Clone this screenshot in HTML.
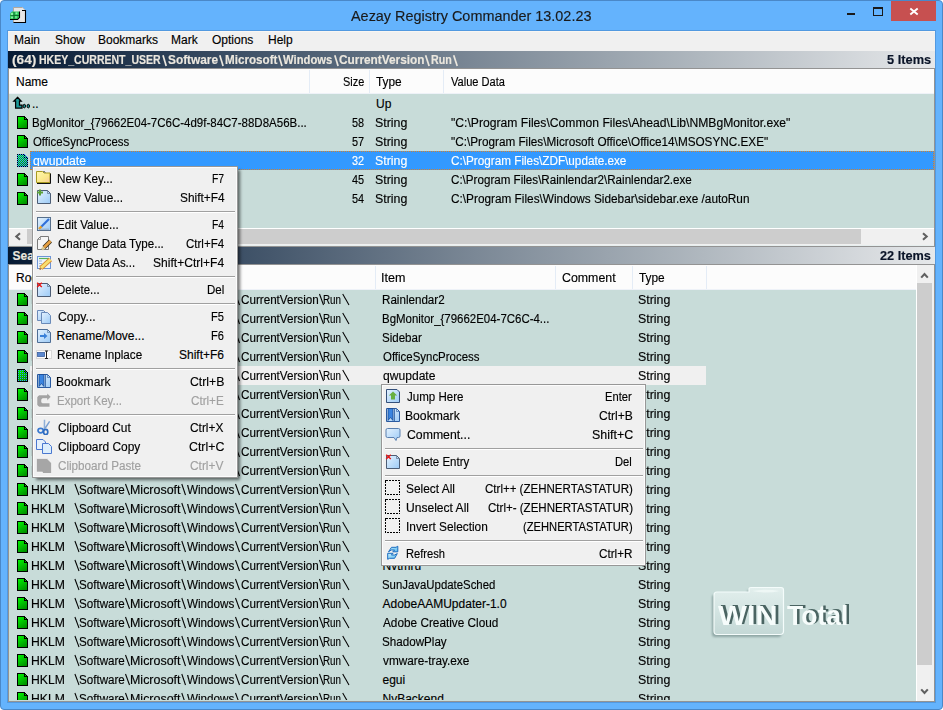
<!DOCTYPE html><html><head><meta charset="utf-8"><style>
html,body{margin:0;padding:0;width:943px;height:710px;overflow:hidden;background:#ffffff;font-family:'Liberation Sans', sans-serif;}
div{-webkit-text-stroke:0.15px currentColor;}
</style></head><body>
<div style="position:absolute;left:0;top:0;width:941px;height:708px;background:#64b3fd;border:1px solid #4a88c8;border-radius:4px"></div>
<svg style="position:absolute;left:8px;top:5px" width="20" height="20" viewBox="8 5 20 20">
<path d="M13.5 7.5 H22.5 L25.5 10.5 V22.5 H13.5 Z" fill="#e6e6e6"/>
<path d="M13.5 22.5 V7.5 H22.5" fill="none" stroke="#b0a8a0" stroke-width="1"/>
<path d="M22.5 7.5 L25.5 10.5" fill="none" stroke="#c0c0c0" stroke-width="1"/>
<path d="M22 10.5 H25.5 V22.5 H13.5" fill="none" stroke="#000" stroke-width="1.1"/>
<path d="M10 13.6 L12 11.6 H19.5 V17.6 L17.6 19.5 H10 Z" fill="#2fc85a"/>
<path d="M10 19.5 H17.6 L19.5 17.6 V11.6" fill="none" stroke="#000" stroke-width="1.1"/>
<path d="M14 12 V19 M10.5 15.5 H19" stroke="#0a6a2a" stroke-width="0.9"/>
<circle cx="12" cy="14" r="1.2" fill="#8af0a8"/><circle cx="16.5" cy="13.2" r="1" fill="#8af0a8"/><circle cx="12" cy="17.5" r="1" fill="#8af0a8"/><circle cx="16" cy="17" r="1" fill="#7ae098"/>
</svg>
<div style="position:absolute;top:8px;font-size:15.5px;line-height:15.5px;color:#1a1a1a;white-space:pre;left:351.00px;transform-origin:0 0;transform:scaleX(0.9302);">Aezay Registry Commander 13.02.23</div>
<div style="position:absolute;left:891px;top:1px;width:45px;height:20px;background:#c75050"></div>
<svg style="position:absolute;left:909px;top:7px" width="10" height="9" viewBox="0 0 10 9">
<path d="M1.3 1.6 L8.7 7.6 M8.7 1.6 L1.3 7.6" stroke="#fff" stroke-width="1.9"/></svg>
<div style="position:absolute;left:847px;top:13px;width:8px;height:2px;background:#1a1a1a"></div>
<div style="position:absolute;left:873px;top:7px;width:8px;height:6px;border:1px solid #1a1a1a;border-top-width:2px"></div>
<div style="position:absolute;left:7px;top:30px;width:927px;height:671px;border:1px solid #5299e0"></div>
<div style="position:absolute;left:8px;top:31px;width:927px;height:20px;background:#f0f0f0"></div>
<div style="position:absolute;left:8px;top:31px;width:927px;height:1px;background:#f9f6f2"></div>
<div style="position:absolute;top:34px;font-size:12px;line-height:12px;color:#000000;white-space:pre;left:14px;">Main</div>
<div style="position:absolute;top:34px;font-size:12px;line-height:12px;color:#000000;white-space:pre;left:55px;">Show</div>
<div style="position:absolute;top:34px;font-size:12px;line-height:12px;color:#000000;white-space:pre;left:98px;">Bookmarks</div>
<div style="position:absolute;top:34px;font-size:12px;line-height:12px;color:#000000;white-space:pre;left:171px;">Mark</div>
<div style="position:absolute;top:34px;font-size:12px;line-height:12px;color:#000000;white-space:pre;left:212px;">Options</div>
<div style="position:absolute;top:34px;font-size:12px;line-height:12px;color:#000000;white-space:pre;left:268px;">Help</div>
<div style="position:absolute;left:8px;top:51px;width:927px;height:17px;background:linear-gradient(to right,#061a33 0%,#3d5066 25%,#7a8795 50%,#b0b8bf 75%,#e6e8ea 100%)"></div>
<div style="position:absolute;top:54px;font-size:12px;line-height:12px;color:#ebe7de;white-space:pre;font-weight:bold;left:12.20px;transform-origin:0 0;transform:scaleX(1.1381);">(64)</div>
<div style="position:absolute;top:54px;font-size:12px;line-height:12px;color:#ebe7de;white-space:pre;font-weight:bold;left:39.30px;transform-origin:0 0;transform:scaleX(0.8770);">HKEY_CURRENT_USER</div>
<svg style="position:absolute;left:0;top:0;overflow:visible" width="1" height="1"><path d="M163.0 55.2 L166.2 66" stroke="#ebe7de" stroke-width="1.7"/></svg>
<div style="position:absolute;top:54px;font-size:12px;line-height:12px;color:#ebe7de;white-space:pre;font-weight:bold;left:167.50px;transform-origin:0 0;transform:scaleX(0.9882);">Software</div>
<svg style="position:absolute;left:0;top:0;overflow:visible" width="1" height="1"><path d="M219.8 55.2 L223.1 66" stroke="#ebe7de" stroke-width="1.7"/></svg>
<div style="position:absolute;top:54px;font-size:12px;line-height:12px;color:#ebe7de;white-space:pre;font-weight:bold;left:224.90px;transform-origin:0 0;transform:scaleX(0.9704);">Microsoft</div>
<svg style="position:absolute;left:0;top:0;overflow:visible" width="1" height="1"><path d="M278.7 55.2 L282.0 66" stroke="#ebe7de" stroke-width="1.7"/></svg>
<div style="position:absolute;top:54px;font-size:12px;line-height:12px;color:#ebe7de;white-space:pre;font-weight:bold;left:283.20px;transform-origin:0 0;transform:scaleX(0.9377);">Windows</div>
<svg style="position:absolute;left:0;top:0;overflow:visible" width="1" height="1"><path d="M334.8 55.2 L338.09999999999997 66" stroke="#ebe7de" stroke-width="1.7"/></svg>
<div style="position:absolute;top:54px;font-size:12px;line-height:12px;color:#ebe7de;white-space:pre;font-weight:bold;left:339.30px;transform-origin:0 0;transform:scaleX(0.9860);">CurrentVersion</div>
<svg style="position:absolute;left:0;top:0;overflow:visible" width="1" height="1"><path d="M425.6 55.2 L429.09999999999997 66" stroke="#ebe7de" stroke-width="1.7"/></svg>
<div style="position:absolute;top:54px;font-size:12px;line-height:12px;color:#ebe7de;white-space:pre;font-weight:bold;left:430.90px;transform-origin:0 0;transform:scaleX(0.8913);">Run</div>
<svg style="position:absolute;left:0;top:0;overflow:visible" width="1" height="1"><path d="M453.7 55.2 L457.2 66" stroke="#ebe7de" stroke-width="1.7"/></svg>
<div style="position:absolute;top:54px;font-size:12px;line-height:12px;color:#0a1428;white-space:pre;font-weight:bold;left:887.20px;transform-origin:0 0;transform:scaleX(1.0683);">5 Items</div>
<div style="position:absolute;left:8px;top:68px;width:927px;height:179px;background:#939393"></div>
<div style="position:absolute;left:9px;top:69px;width:925px;height:25px;background:#fcfcfc"></div>
<div style="position:absolute;left:9px;top:93px;width:925px;height:1px;background:#eef2f8"></div>
<div style="position:absolute;left:309px;top:70px;width:1px;height:23px;background:#e4ecf6"></div>
<div style="position:absolute;left:369px;top:70px;width:1px;height:23px;background:#e4ecf6"></div>
<div style="position:absolute;left:443px;top:70px;width:1px;height:23px;background:#e4ecf6"></div>
<div style="position:absolute;top:76px;font-size:12px;line-height:12px;color:#000000;white-space:pre;left:16px;">Name</div>
<div style="position:absolute;top:76px;font-size:12px;line-height:12px;color:#000000;white-space:pre;left:343.09px;transform-origin:0 0;transform:scaleX(0.9091);">Size</div>
<div style="position:absolute;top:76px;font-size:12px;line-height:12px;color:#000000;white-space:pre;left:376.00px;transform-origin:0 0;transform:scaleX(0.9885);">Type</div>
<div style="position:absolute;top:76px;font-size:12px;line-height:12px;color:#000000;white-space:pre;left:451.00px;transform-origin:0 0;transform:scaleX(0.9220);">Value Data</div>
<div style="position:absolute;left:9px;top:94px;width:925px;height:134px;background:#c8dcd9"></div>
<svg style="position:absolute;left:0;top:0" width="40" height="115" viewBox="0 0 40 115">
<path d="M17.5 97.3 L21.2 101.2 H19.5 V105.2 H22 V108 H15.6 V101.2 H13.8 Z" fill="#1a9a96" stroke="#000" stroke-width="1.25" stroke-linejoin="miter"/>
<ellipse cx="24.3" cy="106.1" rx="1.25" ry="1.8" fill="#1a9a96" stroke="#000" stroke-width="1"/>
<ellipse cx="28.3" cy="106.1" rx="1.25" ry="1.8" fill="#1a9a96" stroke="#000" stroke-width="1"/></svg>
<div style="position:absolute;top:98px;font-size:12px;line-height:12px;color:#000000;white-space:pre;left:32px;">..</div>
<div style="position:absolute;top:98px;font-size:12px;line-height:12px;color:#000000;white-space:pre;left:376px;">Up</div>
<svg style="position:absolute;left:17px;top:116px" width="11" height="13" viewBox="0 0 11 13" shape-rendering="crispEdges">
<defs><linearGradient id="gg" gradientUnits="userSpaceOnUse" x1="1" y1="1" x2="9" y2="12"><stop offset="0" stop-color="#00f400"/><stop offset="1" stop-color="#008c00"/></linearGradient></defs>
<path d="M0 0 H8 V1 H9 V2 H10 V3 H11 V13 H0 Z" fill="#000"/>
<path d="M1 1 H7 V4 H10 V12 H1 Z" fill="url(#gg)"/><rect x="8" y="2" width="1" height="1" fill="#00d800"/></svg>
<div style="position:absolute;top:117px;font-size:12px;line-height:12px;color:#000000;white-space:pre;left:31.54px;transform-origin:0 0;transform:scaleX(0.9579);">BgMonitor_{79662E04-7C6C-4d9f-84C7-88D8A56B...</div>
<div style="position:absolute;top:117px;font-size:12px;line-height:12px;color:#000000;white-space:pre;left:352.20px;transform-origin:0 0;transform:scaleX(0.9077);">58</div>
<div style="position:absolute;top:117px;font-size:12px;line-height:12px;color:#000000;white-space:pre;left:375.47px;transform-origin:0 0;transform:scaleX(1.0333);">String</div>
<div style="position:absolute;top:117px;font-size:12px;line-height:12px;color:#000000;white-space:pre;left:451.00px;transform-origin:0 0;transform:scaleX(1.0119);">&quot;C:\Program Files\Common Files\Ahead\Lib\NMBgMonitor.exe&quot;</div>
<svg style="position:absolute;left:17px;top:135px" width="11" height="13" viewBox="0 0 11 13" shape-rendering="crispEdges">
<defs><linearGradient id="gg" gradientUnits="userSpaceOnUse" x1="1" y1="1" x2="9" y2="12"><stop offset="0" stop-color="#00f400"/><stop offset="1" stop-color="#008c00"/></linearGradient></defs>
<path d="M0 0 H8 V1 H9 V2 H10 V3 H11 V13 H0 Z" fill="#000"/>
<path d="M1 1 H7 V4 H10 V12 H1 Z" fill="url(#gg)"/><rect x="8" y="2" width="1" height="1" fill="#00d800"/></svg>
<div style="position:absolute;top:136px;font-size:12px;line-height:12px;color:#000000;white-space:pre;left:32.50px;transform-origin:0 0;transform:scaleX(0.9505);">OfficeSyncProcess</div>
<div style="position:absolute;top:136px;font-size:12px;line-height:12px;color:#000000;white-space:pre;left:352.20px;transform-origin:0 0;transform:scaleX(0.9077);">57</div>
<div style="position:absolute;top:136px;font-size:12px;line-height:12px;color:#000000;white-space:pre;left:375.47px;transform-origin:0 0;transform:scaleX(1.0333);">String</div>
<div style="position:absolute;top:136px;font-size:12px;line-height:12px;color:#000000;white-space:pre;left:451.00px;transform-origin:0 0;transform:scaleX(0.9784);">&quot;C:\Program Files\Microsoft Office\Office14\MSOSYNC.EXE&quot;</div>
<div style="position:absolute;left:30px;top:151px;width:904px;height:19px;background:#3399ff"></div>
<div style="position:absolute;left:30px;top:151px;width:902px;height:17px;border:1px dotted #d08030"></div>
<svg style="position:absolute;left:17px;top:154px" width="11" height="13" viewBox="0 0 11 13" shape-rendering="crispEdges">
<defs><linearGradient id="gg" gradientUnits="userSpaceOnUse" x1="1" y1="1" x2="9" y2="12"><stop offset="0" stop-color="#00f400"/><stop offset="1" stop-color="#008c00"/></linearGradient></defs>
<path d="M0 0 H8 V1 H9 V2 H10 V3 H11 V13 H0 Z" fill="#000"/>
<path d="M1 1 H7 V4 H10 V12 H1 Z" fill="url(#gg)"/><rect x="8" y="2" width="1" height="1" fill="#00d800"/><defs><pattern id="chk17_154" width="2" height="2" patternUnits="userSpaceOnUse"><rect x="1" y="0" width="1" height="1" fill="#3399ff"/><rect x="0" y="1" width="1" height="1" fill="#3399ff"/></pattern></defs>
<path d="M0 0 H8 V1 H9 V2 H10 V3 H11 V13 H0 Z" fill="url(#chk17_154)"/></svg>
<div style="position:absolute;top:155px;font-size:12px;line-height:12px;color:#ffffff;white-space:pre;left:32.50px;transform-origin:0 0;transform:scaleX(1.0192);">qwupdate</div>
<div style="position:absolute;top:155px;font-size:12px;line-height:12px;color:#ffffff;white-space:pre;left:352.20px;transform-origin:0 0;transform:scaleX(0.9077);">32</div>
<div style="position:absolute;top:155px;font-size:12px;line-height:12px;color:#ffffff;white-space:pre;left:375.47px;transform-origin:0 0;transform:scaleX(1.0333);">String</div>
<div style="position:absolute;top:155px;font-size:12px;line-height:12px;color:#ffffff;white-space:pre;left:451.00px;transform-origin:0 0;transform:scaleX(0.9777);">C:\Program Files\ZDF\update.exe</div>
<svg style="position:absolute;left:17px;top:173px" width="11" height="13" viewBox="0 0 11 13" shape-rendering="crispEdges">
<defs><linearGradient id="gg" gradientUnits="userSpaceOnUse" x1="1" y1="1" x2="9" y2="12"><stop offset="0" stop-color="#00f400"/><stop offset="1" stop-color="#008c00"/></linearGradient></defs>
<path d="M0 0 H8 V1 H9 V2 H10 V3 H11 V13 H0 Z" fill="#000"/>
<path d="M1 1 H7 V4 H10 V12 H1 Z" fill="url(#gg)"/><rect x="8" y="2" width="1" height="1" fill="#00d800"/></svg>
<div style="position:absolute;top:174px;font-size:12px;line-height:12px;color:#000000;white-space:pre;left:32.5px;">Rainlendar2</div>
<div style="position:absolute;top:174px;font-size:12px;line-height:12px;color:#000000;white-space:pre;left:352.20px;transform-origin:0 0;transform:scaleX(0.9077);">45</div>
<div style="position:absolute;top:174px;font-size:12px;line-height:12px;color:#000000;white-space:pre;left:375.47px;transform-origin:0 0;transform:scaleX(1.0333);">String</div>
<div style="position:absolute;top:174px;font-size:12px;line-height:12px;color:#000000;white-space:pre;left:451.00px;transform-origin:0 0;transform:scaleX(0.9679);">C:\Program Files\Rainlendar2\Rainlendar2.exe</div>
<svg style="position:absolute;left:17px;top:192px" width="11" height="13" viewBox="0 0 11 13" shape-rendering="crispEdges">
<defs><linearGradient id="gg" gradientUnits="userSpaceOnUse" x1="1" y1="1" x2="9" y2="12"><stop offset="0" stop-color="#00f400"/><stop offset="1" stop-color="#008c00"/></linearGradient></defs>
<path d="M0 0 H8 V1 H9 V2 H10 V3 H11 V13 H0 Z" fill="#000"/>
<path d="M1 1 H7 V4 H10 V12 H1 Z" fill="url(#gg)"/><rect x="8" y="2" width="1" height="1" fill="#00d800"/></svg>
<div style="position:absolute;top:193px;font-size:12px;line-height:12px;color:#000000;white-space:pre;left:32.5px;">Sidebar</div>
<div style="position:absolute;top:193px;font-size:12px;line-height:12px;color:#000000;white-space:pre;left:352.20px;transform-origin:0 0;transform:scaleX(0.9077);">54</div>
<div style="position:absolute;top:193px;font-size:12px;line-height:12px;color:#000000;white-space:pre;left:375.47px;transform-origin:0 0;transform:scaleX(1.0333);">String</div>
<div style="position:absolute;top:193px;font-size:12px;line-height:12px;color:#000000;white-space:pre;left:451.00px;transform-origin:0 0;transform:scaleX(0.9835);">C:\Program Files\Windows Sidebar\sidebar.exe /autoRun</div>
<div style="position:absolute;left:9px;top:228px;width:925px;height:1px;background:#ffffff"></div>
<div style="position:absolute;left:9px;top:229px;width:925px;height:17px;background:#f0f0f0"></div>
<div style="position:absolute;left:9px;top:245px;width:925px;height:1px;background:#e6eeee"></div>
<div style="position:absolute;left:27px;top:229px;width:834px;height:15px;background:#cdcdcd"></div>
<div style="position:absolute;left:8px;top:247px;width:927px;height:17px;background:linear-gradient(to right,#061a33 0%,#3d5066 25%,#7a8795 50%,#b0b8bf 75%,#e6e8ea 100%)"></div>
<div style="position:absolute;top:250px;font-size:12px;line-height:12px;color:#ebe7de;white-space:pre;font-weight:bold;left:12.5px;">Search Results</div>
<div style="position:absolute;top:250px;font-size:12px;line-height:12px;color:#0a1428;white-space:pre;font-weight:bold;left:880.20px;transform-origin:0 0;transform:scaleX(1.0583);">22 Items</div>
<div style="position:absolute;left:8px;top:264px;width:927px;height:438px;background:#939393"></div>
<div style="position:absolute;left:9px;top:265px;width:925px;height:436px;background:#c8dcd9"></div>
<div style="position:absolute;left:9px;top:265px;width:907px;height:25px;background:#fcfcfc"></div>
<div style="position:absolute;left:9px;top:289px;width:907px;height:1px;background:#eef2f8"></div>
<div style="position:absolute;left:66px;top:266px;width:1px;height:23px;background:#e4ecf6"></div>
<div style="position:absolute;left:375px;top:266px;width:1px;height:23px;background:#e4ecf6"></div>
<div style="position:absolute;left:555px;top:266px;width:1px;height:23px;background:#e4ecf6"></div>
<div style="position:absolute;left:632px;top:266px;width:1px;height:23px;background:#e4ecf6"></div>
<div style="position:absolute;left:706px;top:266px;width:1px;height:23px;background:#e4ecf6"></div>
<div style="position:absolute;top:272px;font-size:12px;line-height:12px;color:#000000;white-space:pre;left:16px;">Root</div>
<div style="position:absolute;top:272px;font-size:12px;line-height:12px;color:#000000;white-space:pre;left:73px;">Path</div>
<div style="position:absolute;top:272px;font-size:12px;line-height:12px;color:#000000;white-space:pre;left:380.95px;transform-origin:0 0;transform:scaleX(1.0455);">Item</div>
<div style="position:absolute;top:272px;font-size:12px;line-height:12px;color:#000000;white-space:pre;left:562.00px;transform-origin:0 0;transform:scaleX(1.0308);">Comment</div>
<div style="position:absolute;top:272px;font-size:12px;line-height:12px;color:#000000;white-space:pre;left:639.00px;transform-origin:0 0;transform:scaleX(0.9885);">Type</div>
<div style="position:absolute;left:9px;top:289px;width:907px;height:411px;overflow:hidden">
<svg style="position:absolute;left:8px;top:4px" width="11" height="13" viewBox="0 0 11 13" shape-rendering="crispEdges">
<defs><linearGradient id="gg" gradientUnits="userSpaceOnUse" x1="1" y1="1" x2="9" y2="12"><stop offset="0" stop-color="#00f400"/><stop offset="1" stop-color="#008c00"/></linearGradient></defs>
<path d="M0 0 H8 V1 H9 V2 H10 V3 H11 V13 H0 Z" fill="#000"/>
<path d="M1 1 H7 V4 H10 V12 H1 Z" fill="url(#gg)"/><rect x="8" y="2" width="1" height="1" fill="#00d800"/></svg>
<div style="position:absolute;top:5px;font-size:12px;line-height:12px;color:#000000;white-space:pre;left:22.08px;transform-origin:0 0;transform:scaleX(1.0156);">HKLM</div>
<div style="position:absolute;top:5px;font-size:12px;line-height:12px;color:#000000;white-space:pre;left:70.03px;transform-origin:0 0;transform:scaleX(0.9674);">Software</div>
<div style="position:absolute;top:5px;font-size:12px;line-height:12px;color:#000000;white-space:pre;left:120.96px;transform-origin:0 0;transform:scaleX(1.0375);">Microsoft</div>
<div style="position:absolute;top:5px;font-size:12px;line-height:12px;color:#000000;white-space:pre;left:177.70px;transform-origin:0 0;transform:scaleX(0.9735);">Windows</div>
<div style="position:absolute;top:5px;font-size:12px;line-height:12px;color:#000000;white-space:pre;left:231.70px;transform-origin:0 0;transform:scaleX(0.9712);">CurrentVersion</div>
<div style="position:absolute;top:5px;font-size:12px;line-height:12px;color:#000000;white-space:pre;left:314.28px;transform-origin:0 0;transform:scaleX(0.8190);">Run</div>
<svg style="position:absolute;left:0;top:0;overflow:visible" width="1" height="1"><path d="M65.9 5 L70.0 16" stroke="#000" stroke-width="1.05"/><path d="M116.5 5 L120.5 16" stroke="#000" stroke-width="1.05"/><path d="M172.8 5 L176.5 16" stroke="#000" stroke-width="1.05"/><path d="M226.5 5 L230.5 16" stroke="#000" stroke-width="1.05"/><path d="M310.5 5 L314.5 16" stroke="#000" stroke-width="1.05"/><path d="M333.7 5 L340.0 16" stroke="#000" stroke-width="1.05"/></svg>
<div style="position:absolute;top:5px;font-size:12px;line-height:12px;color:#000000;white-space:pre;left:372.53px;transform-origin:0 0;transform:scaleX(0.9683);">Rainlendar2</div>
<div style="position:absolute;top:5px;font-size:12px;line-height:12px;color:#000000;white-space:pre;left:628.97px;transform-origin:0 0;transform:scaleX(1.0333);">String</div>
<svg style="position:absolute;left:8px;top:23px" width="11" height="13" viewBox="0 0 11 13" shape-rendering="crispEdges">
<defs><linearGradient id="gg" gradientUnits="userSpaceOnUse" x1="1" y1="1" x2="9" y2="12"><stop offset="0" stop-color="#00f400"/><stop offset="1" stop-color="#008c00"/></linearGradient></defs>
<path d="M0 0 H8 V1 H9 V2 H10 V3 H11 V13 H0 Z" fill="#000"/>
<path d="M1 1 H7 V4 H10 V12 H1 Z" fill="url(#gg)"/><rect x="8" y="2" width="1" height="1" fill="#00d800"/></svg>
<div style="position:absolute;top:24px;font-size:12px;line-height:12px;color:#000000;white-space:pre;left:22.08px;transform-origin:0 0;transform:scaleX(1.0156);">HKLM</div>
<div style="position:absolute;top:24px;font-size:12px;line-height:12px;color:#000000;white-space:pre;left:70.03px;transform-origin:0 0;transform:scaleX(0.9674);">Software</div>
<div style="position:absolute;top:24px;font-size:12px;line-height:12px;color:#000000;white-space:pre;left:120.96px;transform-origin:0 0;transform:scaleX(1.0375);">Microsoft</div>
<div style="position:absolute;top:24px;font-size:12px;line-height:12px;color:#000000;white-space:pre;left:177.70px;transform-origin:0 0;transform:scaleX(0.9735);">Windows</div>
<div style="position:absolute;top:24px;font-size:12px;line-height:12px;color:#000000;white-space:pre;left:231.70px;transform-origin:0 0;transform:scaleX(0.9712);">CurrentVersion</div>
<div style="position:absolute;top:24px;font-size:12px;line-height:12px;color:#000000;white-space:pre;left:314.28px;transform-origin:0 0;transform:scaleX(0.8190);">Run</div>
<svg style="position:absolute;left:0;top:0;overflow:visible" width="1" height="1"><path d="M65.9 24 L70.0 35" stroke="#000" stroke-width="1.05"/><path d="M116.5 24 L120.5 35" stroke="#000" stroke-width="1.05"/><path d="M172.8 24 L176.5 35" stroke="#000" stroke-width="1.05"/><path d="M226.5 24 L230.5 35" stroke="#000" stroke-width="1.05"/><path d="M310.5 24 L314.5 35" stroke="#000" stroke-width="1.05"/><path d="M333.7 24 L340.0 35" stroke="#000" stroke-width="1.05"/></svg>
<div style="position:absolute;top:24px;font-size:12px;line-height:12px;color:#000000;white-space:pre;left:372.55px;transform-origin:0 0;transform:scaleX(0.9540);">BgMonitor_{79662E04-7C6C-4...</div>
<div style="position:absolute;top:24px;font-size:12px;line-height:12px;color:#000000;white-space:pre;left:628.97px;transform-origin:0 0;transform:scaleX(1.0333);">String</div>
<svg style="position:absolute;left:8px;top:42px" width="11" height="13" viewBox="0 0 11 13" shape-rendering="crispEdges">
<defs><linearGradient id="gg" gradientUnits="userSpaceOnUse" x1="1" y1="1" x2="9" y2="12"><stop offset="0" stop-color="#00f400"/><stop offset="1" stop-color="#008c00"/></linearGradient></defs>
<path d="M0 0 H8 V1 H9 V2 H10 V3 H11 V13 H0 Z" fill="#000"/>
<path d="M1 1 H7 V4 H10 V12 H1 Z" fill="url(#gg)"/><rect x="8" y="2" width="1" height="1" fill="#00d800"/></svg>
<div style="position:absolute;top:43px;font-size:12px;line-height:12px;color:#000000;white-space:pre;left:22.08px;transform-origin:0 0;transform:scaleX(1.0156);">HKLM</div>
<div style="position:absolute;top:43px;font-size:12px;line-height:12px;color:#000000;white-space:pre;left:70.03px;transform-origin:0 0;transform:scaleX(0.9674);">Software</div>
<div style="position:absolute;top:43px;font-size:12px;line-height:12px;color:#000000;white-space:pre;left:120.96px;transform-origin:0 0;transform:scaleX(1.0375);">Microsoft</div>
<div style="position:absolute;top:43px;font-size:12px;line-height:12px;color:#000000;white-space:pre;left:177.70px;transform-origin:0 0;transform:scaleX(0.9735);">Windows</div>
<div style="position:absolute;top:43px;font-size:12px;line-height:12px;color:#000000;white-space:pre;left:231.70px;transform-origin:0 0;transform:scaleX(0.9712);">CurrentVersion</div>
<div style="position:absolute;top:43px;font-size:12px;line-height:12px;color:#000000;white-space:pre;left:314.28px;transform-origin:0 0;transform:scaleX(0.8190);">Run</div>
<svg style="position:absolute;left:0;top:0;overflow:visible" width="1" height="1"><path d="M65.9 43 L70.0 54" stroke="#000" stroke-width="1.05"/><path d="M116.5 43 L120.5 54" stroke="#000" stroke-width="1.05"/><path d="M172.8 43 L176.5 54" stroke="#000" stroke-width="1.05"/><path d="M226.5 43 L230.5 54" stroke="#000" stroke-width="1.05"/><path d="M310.5 43 L314.5 54" stroke="#000" stroke-width="1.05"/><path d="M333.7 43 L340.0 54" stroke="#000" stroke-width="1.05"/></svg>
<div style="position:absolute;top:43px;font-size:12px;line-height:12px;color:#000000;white-space:pre;left:372.54px;transform-origin:0 0;transform:scaleX(0.9625);">Sidebar</div>
<div style="position:absolute;top:43px;font-size:12px;line-height:12px;color:#000000;white-space:pre;left:628.97px;transform-origin:0 0;transform:scaleX(1.0333);">String</div>
<svg style="position:absolute;left:8px;top:61px" width="11" height="13" viewBox="0 0 11 13" shape-rendering="crispEdges">
<defs><linearGradient id="gg" gradientUnits="userSpaceOnUse" x1="1" y1="1" x2="9" y2="12"><stop offset="0" stop-color="#00f400"/><stop offset="1" stop-color="#008c00"/></linearGradient></defs>
<path d="M0 0 H8 V1 H9 V2 H10 V3 H11 V13 H0 Z" fill="#000"/>
<path d="M1 1 H7 V4 H10 V12 H1 Z" fill="url(#gg)"/><rect x="8" y="2" width="1" height="1" fill="#00d800"/></svg>
<div style="position:absolute;top:62px;font-size:12px;line-height:12px;color:#000000;white-space:pre;left:22.08px;transform-origin:0 0;transform:scaleX(1.0156);">HKLM</div>
<div style="position:absolute;top:62px;font-size:12px;line-height:12px;color:#000000;white-space:pre;left:70.03px;transform-origin:0 0;transform:scaleX(0.9674);">Software</div>
<div style="position:absolute;top:62px;font-size:12px;line-height:12px;color:#000000;white-space:pre;left:120.96px;transform-origin:0 0;transform:scaleX(1.0375);">Microsoft</div>
<div style="position:absolute;top:62px;font-size:12px;line-height:12px;color:#000000;white-space:pre;left:177.70px;transform-origin:0 0;transform:scaleX(0.9735);">Windows</div>
<div style="position:absolute;top:62px;font-size:12px;line-height:12px;color:#000000;white-space:pre;left:231.70px;transform-origin:0 0;transform:scaleX(0.9712);">CurrentVersion</div>
<div style="position:absolute;top:62px;font-size:12px;line-height:12px;color:#000000;white-space:pre;left:314.28px;transform-origin:0 0;transform:scaleX(0.8190);">Run</div>
<svg style="position:absolute;left:0;top:0;overflow:visible" width="1" height="1"><path d="M65.9 62 L70.0 73" stroke="#000" stroke-width="1.05"/><path d="M116.5 62 L120.5 73" stroke="#000" stroke-width="1.05"/><path d="M172.8 62 L176.5 73" stroke="#000" stroke-width="1.05"/><path d="M226.5 62 L230.5 73" stroke="#000" stroke-width="1.05"/><path d="M310.5 62 L314.5 73" stroke="#000" stroke-width="1.05"/><path d="M333.7 62 L340.0 73" stroke="#000" stroke-width="1.05"/></svg>
<div style="position:absolute;top:62px;font-size:12px;line-height:12px;color:#000000;white-space:pre;left:373.50px;transform-origin:0 0;transform:scaleX(0.9535);">OfficeSyncProcess</div>
<div style="position:absolute;top:62px;font-size:12px;line-height:12px;color:#000000;white-space:pre;left:628.97px;transform-origin:0 0;transform:scaleX(1.0333);">String</div>
<div style="position:absolute;left:21px;top:77px;width:676px;height:19px;background:#f0f0f0"></div>
<svg style="position:absolute;left:8px;top:80px" width="11" height="13" viewBox="0 0 11 13" shape-rendering="crispEdges">
<defs><linearGradient id="gg" gradientUnits="userSpaceOnUse" x1="1" y1="1" x2="9" y2="12"><stop offset="0" stop-color="#00f400"/><stop offset="1" stop-color="#008c00"/></linearGradient></defs>
<path d="M0 0 H8 V1 H9 V2 H10 V3 H11 V13 H0 Z" fill="#000"/>
<path d="M1 1 H7 V4 H10 V12 H1 Z" fill="url(#gg)"/><rect x="8" y="2" width="1" height="1" fill="#00d800"/><defs><pattern id="chk8_80" width="2" height="2" patternUnits="userSpaceOnUse"><rect x="1" y="1" width="1" height="1" fill="#3399ff"/></pattern></defs><path d="M0 0 H8 V1 H9 V2 H10 V3 H11 V13 H0 Z" fill="url(#chk8_80)"/></svg>
<div style="position:absolute;top:81px;font-size:12px;line-height:12px;color:#000000;white-space:pre;left:22.08px;transform-origin:0 0;transform:scaleX(1.0156);">HKLM</div>
<div style="position:absolute;top:81px;font-size:12px;line-height:12px;color:#000000;white-space:pre;left:70.03px;transform-origin:0 0;transform:scaleX(0.9674);">Software</div>
<div style="position:absolute;top:81px;font-size:12px;line-height:12px;color:#000000;white-space:pre;left:120.96px;transform-origin:0 0;transform:scaleX(1.0375);">Microsoft</div>
<div style="position:absolute;top:81px;font-size:12px;line-height:12px;color:#000000;white-space:pre;left:177.70px;transform-origin:0 0;transform:scaleX(0.9735);">Windows</div>
<div style="position:absolute;top:81px;font-size:12px;line-height:12px;color:#000000;white-space:pre;left:231.70px;transform-origin:0 0;transform:scaleX(0.9712);">CurrentVersion</div>
<div style="position:absolute;top:81px;font-size:12px;line-height:12px;color:#000000;white-space:pre;left:314.28px;transform-origin:0 0;transform:scaleX(0.8190);">Run</div>
<svg style="position:absolute;left:0;top:0;overflow:visible" width="1" height="1"><path d="M65.9 81 L70.0 92" stroke="#000" stroke-width="1.05"/><path d="M116.5 81 L120.5 92" stroke="#000" stroke-width="1.05"/><path d="M172.8 81 L176.5 92" stroke="#000" stroke-width="1.05"/><path d="M226.5 81 L230.5 92" stroke="#000" stroke-width="1.05"/><path d="M310.5 81 L314.5 92" stroke="#000" stroke-width="1.05"/><path d="M333.7 81 L340.0 92" stroke="#000" stroke-width="1.05"/></svg>
<div style="position:absolute;top:81px;font-size:12px;line-height:12px;color:#000000;white-space:pre;left:373.50px;transform-origin:0 0;transform:scaleX(1.0077);">qwupdate</div>
<div style="position:absolute;top:81px;font-size:12px;line-height:12px;color:#000000;white-space:pre;left:628.97px;transform-origin:0 0;transform:scaleX(1.0333);">String</div>
<svg style="position:absolute;left:8px;top:99px" width="11" height="13" viewBox="0 0 11 13" shape-rendering="crispEdges">
<defs><linearGradient id="gg" gradientUnits="userSpaceOnUse" x1="1" y1="1" x2="9" y2="12"><stop offset="0" stop-color="#00f400"/><stop offset="1" stop-color="#008c00"/></linearGradient></defs>
<path d="M0 0 H8 V1 H9 V2 H10 V3 H11 V13 H0 Z" fill="#000"/>
<path d="M1 1 H7 V4 H10 V12 H1 Z" fill="url(#gg)"/><rect x="8" y="2" width="1" height="1" fill="#00d800"/></svg>
<div style="position:absolute;top:100px;font-size:12px;line-height:12px;color:#000000;white-space:pre;left:22.08px;transform-origin:0 0;transform:scaleX(1.0156);">HKLM</div>
<div style="position:absolute;top:100px;font-size:12px;line-height:12px;color:#000000;white-space:pre;left:70.03px;transform-origin:0 0;transform:scaleX(0.9674);">Software</div>
<div style="position:absolute;top:100px;font-size:12px;line-height:12px;color:#000000;white-space:pre;left:120.96px;transform-origin:0 0;transform:scaleX(1.0375);">Microsoft</div>
<div style="position:absolute;top:100px;font-size:12px;line-height:12px;color:#000000;white-space:pre;left:177.70px;transform-origin:0 0;transform:scaleX(0.9735);">Windows</div>
<div style="position:absolute;top:100px;font-size:12px;line-height:12px;color:#000000;white-space:pre;left:231.70px;transform-origin:0 0;transform:scaleX(0.9712);">CurrentVersion</div>
<div style="position:absolute;top:100px;font-size:12px;line-height:12px;color:#000000;white-space:pre;left:314.28px;transform-origin:0 0;transform:scaleX(0.8190);">Run</div>
<svg style="position:absolute;left:0;top:0;overflow:visible" width="1" height="1"><path d="M65.9 100 L70.0 111" stroke="#000" stroke-width="1.05"/><path d="M116.5 100 L120.5 111" stroke="#000" stroke-width="1.05"/><path d="M172.8 100 L176.5 111" stroke="#000" stroke-width="1.05"/><path d="M226.5 100 L230.5 111" stroke="#000" stroke-width="1.05"/><path d="M310.5 100 L314.5 111" stroke="#000" stroke-width="1.05"/><path d="M333.7 100 L340.0 111" stroke="#000" stroke-width="1.05"/></svg>
<div style="position:absolute;top:100px;font-size:12px;line-height:12px;color:#000000;white-space:pre;left:373.5px;">NvBackend</div>
<div style="position:absolute;top:100px;font-size:12px;line-height:12px;color:#000000;white-space:pre;left:628.97px;transform-origin:0 0;transform:scaleX(1.0333);">String</div>
<svg style="position:absolute;left:8px;top:118px" width="11" height="13" viewBox="0 0 11 13" shape-rendering="crispEdges">
<defs><linearGradient id="gg" gradientUnits="userSpaceOnUse" x1="1" y1="1" x2="9" y2="12"><stop offset="0" stop-color="#00f400"/><stop offset="1" stop-color="#008c00"/></linearGradient></defs>
<path d="M0 0 H8 V1 H9 V2 H10 V3 H11 V13 H0 Z" fill="#000"/>
<path d="M1 1 H7 V4 H10 V12 H1 Z" fill="url(#gg)"/><rect x="8" y="2" width="1" height="1" fill="#00d800"/></svg>
<div style="position:absolute;top:119px;font-size:12px;line-height:12px;color:#000000;white-space:pre;left:22.08px;transform-origin:0 0;transform:scaleX(1.0156);">HKLM</div>
<div style="position:absolute;top:119px;font-size:12px;line-height:12px;color:#000000;white-space:pre;left:70.03px;transform-origin:0 0;transform:scaleX(0.9674);">Software</div>
<div style="position:absolute;top:119px;font-size:12px;line-height:12px;color:#000000;white-space:pre;left:120.96px;transform-origin:0 0;transform:scaleX(1.0375);">Microsoft</div>
<div style="position:absolute;top:119px;font-size:12px;line-height:12px;color:#000000;white-space:pre;left:177.70px;transform-origin:0 0;transform:scaleX(0.9735);">Windows</div>
<div style="position:absolute;top:119px;font-size:12px;line-height:12px;color:#000000;white-space:pre;left:231.70px;transform-origin:0 0;transform:scaleX(0.9712);">CurrentVersion</div>
<div style="position:absolute;top:119px;font-size:12px;line-height:12px;color:#000000;white-space:pre;left:314.28px;transform-origin:0 0;transform:scaleX(0.8190);">Run</div>
<svg style="position:absolute;left:0;top:0;overflow:visible" width="1" height="1"><path d="M65.9 119 L70.0 130" stroke="#000" stroke-width="1.05"/><path d="M116.5 119 L120.5 130" stroke="#000" stroke-width="1.05"/><path d="M172.8 119 L176.5 130" stroke="#000" stroke-width="1.05"/><path d="M226.5 119 L230.5 130" stroke="#000" stroke-width="1.05"/><path d="M310.5 119 L314.5 130" stroke="#000" stroke-width="1.05"/><path d="M333.7 119 L340.0 130" stroke="#000" stroke-width="1.05"/></svg>
<div style="position:absolute;top:119px;font-size:12px;line-height:12px;color:#000000;white-space:pre;left:373.50px;transform-origin:0 0;transform:scaleX(1.0000);">egui</div>
<div style="position:absolute;top:119px;font-size:12px;line-height:12px;color:#000000;white-space:pre;left:628.97px;transform-origin:0 0;transform:scaleX(1.0333);">String</div>
<svg style="position:absolute;left:8px;top:137px" width="11" height="13" viewBox="0 0 11 13" shape-rendering="crispEdges">
<defs><linearGradient id="gg" gradientUnits="userSpaceOnUse" x1="1" y1="1" x2="9" y2="12"><stop offset="0" stop-color="#00f400"/><stop offset="1" stop-color="#008c00"/></linearGradient></defs>
<path d="M0 0 H8 V1 H9 V2 H10 V3 H11 V13 H0 Z" fill="#000"/>
<path d="M1 1 H7 V4 H10 V12 H1 Z" fill="url(#gg)"/><rect x="8" y="2" width="1" height="1" fill="#00d800"/></svg>
<div style="position:absolute;top:138px;font-size:12px;line-height:12px;color:#000000;white-space:pre;left:22.08px;transform-origin:0 0;transform:scaleX(1.0156);">HKLM</div>
<div style="position:absolute;top:138px;font-size:12px;line-height:12px;color:#000000;white-space:pre;left:70.03px;transform-origin:0 0;transform:scaleX(0.9674);">Software</div>
<div style="position:absolute;top:138px;font-size:12px;line-height:12px;color:#000000;white-space:pre;left:120.96px;transform-origin:0 0;transform:scaleX(1.0375);">Microsoft</div>
<div style="position:absolute;top:138px;font-size:12px;line-height:12px;color:#000000;white-space:pre;left:177.70px;transform-origin:0 0;transform:scaleX(0.9735);">Windows</div>
<div style="position:absolute;top:138px;font-size:12px;line-height:12px;color:#000000;white-space:pre;left:231.70px;transform-origin:0 0;transform:scaleX(0.9712);">CurrentVersion</div>
<div style="position:absolute;top:138px;font-size:12px;line-height:12px;color:#000000;white-space:pre;left:314.28px;transform-origin:0 0;transform:scaleX(0.8190);">Run</div>
<svg style="position:absolute;left:0;top:0;overflow:visible" width="1" height="1"><path d="M65.9 138 L70.0 149" stroke="#000" stroke-width="1.05"/><path d="M116.5 138 L120.5 149" stroke="#000" stroke-width="1.05"/><path d="M172.8 138 L176.5 149" stroke="#000" stroke-width="1.05"/><path d="M226.5 138 L230.5 149" stroke="#000" stroke-width="1.05"/><path d="M310.5 138 L314.5 149" stroke="#000" stroke-width="1.05"/><path d="M333.7 138 L340.0 149" stroke="#000" stroke-width="1.05"/></svg>
<div style="position:absolute;top:138px;font-size:12px;line-height:12px;color:#000000;white-space:pre;left:373.50px;transform-origin:0 0;transform:scaleX(0.9830);">vmware-tray.exe</div>
<div style="position:absolute;top:138px;font-size:12px;line-height:12px;color:#000000;white-space:pre;left:628.97px;transform-origin:0 0;transform:scaleX(1.0333);">String</div>
<svg style="position:absolute;left:8px;top:156px" width="11" height="13" viewBox="0 0 11 13" shape-rendering="crispEdges">
<defs><linearGradient id="gg" gradientUnits="userSpaceOnUse" x1="1" y1="1" x2="9" y2="12"><stop offset="0" stop-color="#00f400"/><stop offset="1" stop-color="#008c00"/></linearGradient></defs>
<path d="M0 0 H8 V1 H9 V2 H10 V3 H11 V13 H0 Z" fill="#000"/>
<path d="M1 1 H7 V4 H10 V12 H1 Z" fill="url(#gg)"/><rect x="8" y="2" width="1" height="1" fill="#00d800"/></svg>
<div style="position:absolute;top:157px;font-size:12px;line-height:12px;color:#000000;white-space:pre;left:22.08px;transform-origin:0 0;transform:scaleX(1.0156);">HKLM</div>
<div style="position:absolute;top:157px;font-size:12px;line-height:12px;color:#000000;white-space:pre;left:70.03px;transform-origin:0 0;transform:scaleX(0.9674);">Software</div>
<div style="position:absolute;top:157px;font-size:12px;line-height:12px;color:#000000;white-space:pre;left:120.96px;transform-origin:0 0;transform:scaleX(1.0375);">Microsoft</div>
<div style="position:absolute;top:157px;font-size:12px;line-height:12px;color:#000000;white-space:pre;left:177.70px;transform-origin:0 0;transform:scaleX(0.9735);">Windows</div>
<div style="position:absolute;top:157px;font-size:12px;line-height:12px;color:#000000;white-space:pre;left:231.70px;transform-origin:0 0;transform:scaleX(0.9712);">CurrentVersion</div>
<div style="position:absolute;top:157px;font-size:12px;line-height:12px;color:#000000;white-space:pre;left:314.28px;transform-origin:0 0;transform:scaleX(0.8190);">Run</div>
<svg style="position:absolute;left:0;top:0;overflow:visible" width="1" height="1"><path d="M65.9 157 L70.0 168" stroke="#000" stroke-width="1.05"/><path d="M116.5 157 L120.5 168" stroke="#000" stroke-width="1.05"/><path d="M172.8 157 L176.5 168" stroke="#000" stroke-width="1.05"/><path d="M226.5 157 L230.5 168" stroke="#000" stroke-width="1.05"/><path d="M310.5 157 L314.5 168" stroke="#000" stroke-width="1.05"/><path d="M333.7 157 L340.0 168" stroke="#000" stroke-width="1.05"/></svg>
<div style="position:absolute;top:157px;font-size:12px;line-height:12px;color:#000000;white-space:pre;left:372.53px;transform-origin:0 0;transform:scaleX(0.9697);">ShadowPlay</div>
<div style="position:absolute;top:157px;font-size:12px;line-height:12px;color:#000000;white-space:pre;left:628.97px;transform-origin:0 0;transform:scaleX(1.0333);">String</div>
<svg style="position:absolute;left:8px;top:175px" width="11" height="13" viewBox="0 0 11 13" shape-rendering="crispEdges">
<defs><linearGradient id="gg" gradientUnits="userSpaceOnUse" x1="1" y1="1" x2="9" y2="12"><stop offset="0" stop-color="#00f400"/><stop offset="1" stop-color="#008c00"/></linearGradient></defs>
<path d="M0 0 H8 V1 H9 V2 H10 V3 H11 V13 H0 Z" fill="#000"/>
<path d="M1 1 H7 V4 H10 V12 H1 Z" fill="url(#gg)"/><rect x="8" y="2" width="1" height="1" fill="#00d800"/></svg>
<div style="position:absolute;top:176px;font-size:12px;line-height:12px;color:#000000;white-space:pre;left:22.08px;transform-origin:0 0;transform:scaleX(1.0156);">HKLM</div>
<div style="position:absolute;top:176px;font-size:12px;line-height:12px;color:#000000;white-space:pre;left:70.03px;transform-origin:0 0;transform:scaleX(0.9674);">Software</div>
<div style="position:absolute;top:176px;font-size:12px;line-height:12px;color:#000000;white-space:pre;left:120.96px;transform-origin:0 0;transform:scaleX(1.0375);">Microsoft</div>
<div style="position:absolute;top:176px;font-size:12px;line-height:12px;color:#000000;white-space:pre;left:177.70px;transform-origin:0 0;transform:scaleX(0.9735);">Windows</div>
<div style="position:absolute;top:176px;font-size:12px;line-height:12px;color:#000000;white-space:pre;left:231.70px;transform-origin:0 0;transform:scaleX(0.9712);">CurrentVersion</div>
<div style="position:absolute;top:176px;font-size:12px;line-height:12px;color:#000000;white-space:pre;left:314.28px;transform-origin:0 0;transform:scaleX(0.8190);">Run</div>
<svg style="position:absolute;left:0;top:0;overflow:visible" width="1" height="1"><path d="M65.9 176 L70.0 187" stroke="#000" stroke-width="1.05"/><path d="M116.5 176 L120.5 187" stroke="#000" stroke-width="1.05"/><path d="M172.8 176 L176.5 187" stroke="#000" stroke-width="1.05"/><path d="M226.5 176 L230.5 187" stroke="#000" stroke-width="1.05"/><path d="M310.5 176 L314.5 187" stroke="#000" stroke-width="1.05"/><path d="M333.7 176 L340.0 187" stroke="#000" stroke-width="1.05"/></svg>
<div style="position:absolute;top:176px;font-size:12px;line-height:12px;color:#000000;white-space:pre;left:373.50px;transform-origin:0 0;transform:scaleX(0.9829);">Adobe Creative Cloud</div>
<div style="position:absolute;top:176px;font-size:12px;line-height:12px;color:#000000;white-space:pre;left:628.97px;transform-origin:0 0;transform:scaleX(1.0333);">String</div>
<svg style="position:absolute;left:8px;top:194px" width="11" height="13" viewBox="0 0 11 13" shape-rendering="crispEdges">
<defs><linearGradient id="gg" gradientUnits="userSpaceOnUse" x1="1" y1="1" x2="9" y2="12"><stop offset="0" stop-color="#00f400"/><stop offset="1" stop-color="#008c00"/></linearGradient></defs>
<path d="M0 0 H8 V1 H9 V2 H10 V3 H11 V13 H0 Z" fill="#000"/>
<path d="M1 1 H7 V4 H10 V12 H1 Z" fill="url(#gg)"/><rect x="8" y="2" width="1" height="1" fill="#00d800"/></svg>
<div style="position:absolute;top:195px;font-size:12px;line-height:12px;color:#000000;white-space:pre;left:22.08px;transform-origin:0 0;transform:scaleX(1.0156);">HKLM</div>
<div style="position:absolute;top:195px;font-size:12px;line-height:12px;color:#000000;white-space:pre;left:70.03px;transform-origin:0 0;transform:scaleX(0.9674);">Software</div>
<div style="position:absolute;top:195px;font-size:12px;line-height:12px;color:#000000;white-space:pre;left:120.96px;transform-origin:0 0;transform:scaleX(1.0375);">Microsoft</div>
<div style="position:absolute;top:195px;font-size:12px;line-height:12px;color:#000000;white-space:pre;left:177.70px;transform-origin:0 0;transform:scaleX(0.9735);">Windows</div>
<div style="position:absolute;top:195px;font-size:12px;line-height:12px;color:#000000;white-space:pre;left:231.70px;transform-origin:0 0;transform:scaleX(0.9712);">CurrentVersion</div>
<div style="position:absolute;top:195px;font-size:12px;line-height:12px;color:#000000;white-space:pre;left:314.28px;transform-origin:0 0;transform:scaleX(0.8190);">Run</div>
<svg style="position:absolute;left:0;top:0;overflow:visible" width="1" height="1"><path d="M65.9 195 L70.0 206" stroke="#000" stroke-width="1.05"/><path d="M116.5 195 L120.5 206" stroke="#000" stroke-width="1.05"/><path d="M172.8 195 L176.5 206" stroke="#000" stroke-width="1.05"/><path d="M226.5 195 L230.5 206" stroke="#000" stroke-width="1.05"/><path d="M310.5 195 L314.5 206" stroke="#000" stroke-width="1.05"/><path d="M333.7 195 L340.0 206" stroke="#000" stroke-width="1.05"/></svg>
<div style="position:absolute;top:195px;font-size:12px;line-height:12px;color:#000000;white-space:pre;left:373.50px;transform-origin:0 0;transform:scaleX(1.0000);">AdobeAAMUpdater-1.0</div>
<div style="position:absolute;top:195px;font-size:12px;line-height:12px;color:#000000;white-space:pre;left:628.97px;transform-origin:0 0;transform:scaleX(1.0333);">String</div>
<svg style="position:absolute;left:8px;top:213px" width="11" height="13" viewBox="0 0 11 13" shape-rendering="crispEdges">
<defs><linearGradient id="gg" gradientUnits="userSpaceOnUse" x1="1" y1="1" x2="9" y2="12"><stop offset="0" stop-color="#00f400"/><stop offset="1" stop-color="#008c00"/></linearGradient></defs>
<path d="M0 0 H8 V1 H9 V2 H10 V3 H11 V13 H0 Z" fill="#000"/>
<path d="M1 1 H7 V4 H10 V12 H1 Z" fill="url(#gg)"/><rect x="8" y="2" width="1" height="1" fill="#00d800"/></svg>
<div style="position:absolute;top:214px;font-size:12px;line-height:12px;color:#000000;white-space:pre;left:22.08px;transform-origin:0 0;transform:scaleX(1.0156);">HKLM</div>
<div style="position:absolute;top:214px;font-size:12px;line-height:12px;color:#000000;white-space:pre;left:70.03px;transform-origin:0 0;transform:scaleX(0.9674);">Software</div>
<div style="position:absolute;top:214px;font-size:12px;line-height:12px;color:#000000;white-space:pre;left:120.96px;transform-origin:0 0;transform:scaleX(1.0375);">Microsoft</div>
<div style="position:absolute;top:214px;font-size:12px;line-height:12px;color:#000000;white-space:pre;left:177.70px;transform-origin:0 0;transform:scaleX(0.9735);">Windows</div>
<div style="position:absolute;top:214px;font-size:12px;line-height:12px;color:#000000;white-space:pre;left:231.70px;transform-origin:0 0;transform:scaleX(0.9712);">CurrentVersion</div>
<div style="position:absolute;top:214px;font-size:12px;line-height:12px;color:#000000;white-space:pre;left:314.28px;transform-origin:0 0;transform:scaleX(0.8190);">Run</div>
<svg style="position:absolute;left:0;top:0;overflow:visible" width="1" height="1"><path d="M65.9 214 L70.0 225" stroke="#000" stroke-width="1.05"/><path d="M116.5 214 L120.5 225" stroke="#000" stroke-width="1.05"/><path d="M172.8 214 L176.5 225" stroke="#000" stroke-width="1.05"/><path d="M226.5 214 L230.5 225" stroke="#000" stroke-width="1.05"/><path d="M310.5 214 L314.5 225" stroke="#000" stroke-width="1.05"/><path d="M333.7 214 L340.0 225" stroke="#000" stroke-width="1.05"/></svg>
<div style="position:absolute;top:214px;font-size:12px;line-height:12px;color:#000000;white-space:pre;left:372.55px;transform-origin:0 0;transform:scaleX(0.9492);">SunJavaUpdateSched</div>
<div style="position:absolute;top:214px;font-size:12px;line-height:12px;color:#000000;white-space:pre;left:628.97px;transform-origin:0 0;transform:scaleX(1.0333);">String</div>
<svg style="position:absolute;left:8px;top:232px" width="11" height="13" viewBox="0 0 11 13" shape-rendering="crispEdges">
<defs><linearGradient id="gg" gradientUnits="userSpaceOnUse" x1="1" y1="1" x2="9" y2="12"><stop offset="0" stop-color="#00f400"/><stop offset="1" stop-color="#008c00"/></linearGradient></defs>
<path d="M0 0 H8 V1 H9 V2 H10 V3 H11 V13 H0 Z" fill="#000"/>
<path d="M1 1 H7 V4 H10 V12 H1 Z" fill="url(#gg)"/><rect x="8" y="2" width="1" height="1" fill="#00d800"/></svg>
<div style="position:absolute;top:233px;font-size:12px;line-height:12px;color:#000000;white-space:pre;left:22.08px;transform-origin:0 0;transform:scaleX(1.0156);">HKLM</div>
<div style="position:absolute;top:233px;font-size:12px;line-height:12px;color:#000000;white-space:pre;left:70.03px;transform-origin:0 0;transform:scaleX(0.9674);">Software</div>
<div style="position:absolute;top:233px;font-size:12px;line-height:12px;color:#000000;white-space:pre;left:120.96px;transform-origin:0 0;transform:scaleX(1.0375);">Microsoft</div>
<div style="position:absolute;top:233px;font-size:12px;line-height:12px;color:#000000;white-space:pre;left:177.70px;transform-origin:0 0;transform:scaleX(0.9735);">Windows</div>
<div style="position:absolute;top:233px;font-size:12px;line-height:12px;color:#000000;white-space:pre;left:231.70px;transform-origin:0 0;transform:scaleX(0.9712);">CurrentVersion</div>
<div style="position:absolute;top:233px;font-size:12px;line-height:12px;color:#000000;white-space:pre;left:314.28px;transform-origin:0 0;transform:scaleX(0.8190);">Run</div>
<svg style="position:absolute;left:0;top:0;overflow:visible" width="1" height="1"><path d="M65.9 233 L70.0 244" stroke="#000" stroke-width="1.05"/><path d="M116.5 233 L120.5 244" stroke="#000" stroke-width="1.05"/><path d="M172.8 233 L176.5 244" stroke="#000" stroke-width="1.05"/><path d="M226.5 233 L230.5 244" stroke="#000" stroke-width="1.05"/><path d="M310.5 233 L314.5 244" stroke="#000" stroke-width="1.05"/><path d="M333.7 233 L340.0 244" stroke="#000" stroke-width="1.05"/></svg>
<div style="position:absolute;top:233px;font-size:12px;line-height:12px;color:#000000;white-space:pre;left:373.5px;">Nvtmru</div>
<div style="position:absolute;top:233px;font-size:12px;line-height:12px;color:#000000;white-space:pre;left:628.97px;transform-origin:0 0;transform:scaleX(1.0333);">String</div>
<svg style="position:absolute;left:8px;top:251px" width="11" height="13" viewBox="0 0 11 13" shape-rendering="crispEdges">
<defs><linearGradient id="gg" gradientUnits="userSpaceOnUse" x1="1" y1="1" x2="9" y2="12"><stop offset="0" stop-color="#00f400"/><stop offset="1" stop-color="#008c00"/></linearGradient></defs>
<path d="M0 0 H8 V1 H9 V2 H10 V3 H11 V13 H0 Z" fill="#000"/>
<path d="M1 1 H7 V4 H10 V12 H1 Z" fill="url(#gg)"/><rect x="8" y="2" width="1" height="1" fill="#00d800"/></svg>
<div style="position:absolute;top:252px;font-size:12px;line-height:12px;color:#000000;white-space:pre;left:22.08px;transform-origin:0 0;transform:scaleX(1.0156);">HKLM</div>
<div style="position:absolute;top:252px;font-size:12px;line-height:12px;color:#000000;white-space:pre;left:70.03px;transform-origin:0 0;transform:scaleX(0.9674);">Software</div>
<div style="position:absolute;top:252px;font-size:12px;line-height:12px;color:#000000;white-space:pre;left:120.96px;transform-origin:0 0;transform:scaleX(1.0375);">Microsoft</div>
<div style="position:absolute;top:252px;font-size:12px;line-height:12px;color:#000000;white-space:pre;left:177.70px;transform-origin:0 0;transform:scaleX(0.9735);">Windows</div>
<div style="position:absolute;top:252px;font-size:12px;line-height:12px;color:#000000;white-space:pre;left:231.70px;transform-origin:0 0;transform:scaleX(0.9712);">CurrentVersion</div>
<div style="position:absolute;top:252px;font-size:12px;line-height:12px;color:#000000;white-space:pre;left:314.28px;transform-origin:0 0;transform:scaleX(0.8190);">Run</div>
<svg style="position:absolute;left:0;top:0;overflow:visible" width="1" height="1"><path d="M65.9 252 L70.0 263" stroke="#000" stroke-width="1.05"/><path d="M116.5 252 L120.5 263" stroke="#000" stroke-width="1.05"/><path d="M172.8 252 L176.5 263" stroke="#000" stroke-width="1.05"/><path d="M226.5 252 L230.5 263" stroke="#000" stroke-width="1.05"/><path d="M310.5 252 L314.5 263" stroke="#000" stroke-width="1.05"/><path d="M333.7 252 L340.0 263" stroke="#000" stroke-width="1.05"/></svg>
<div style="position:absolute;top:252px;font-size:12px;line-height:12px;color:#000000;white-space:pre;left:372.54px;transform-origin:0 0;transform:scaleX(0.9625);">Sidebar</div>
<div style="position:absolute;top:252px;font-size:12px;line-height:12px;color:#000000;white-space:pre;left:628.97px;transform-origin:0 0;transform:scaleX(1.0333);">String</div>
<svg style="position:absolute;left:8px;top:270px" width="11" height="13" viewBox="0 0 11 13" shape-rendering="crispEdges">
<defs><linearGradient id="gg" gradientUnits="userSpaceOnUse" x1="1" y1="1" x2="9" y2="12"><stop offset="0" stop-color="#00f400"/><stop offset="1" stop-color="#008c00"/></linearGradient></defs>
<path d="M0 0 H8 V1 H9 V2 H10 V3 H11 V13 H0 Z" fill="#000"/>
<path d="M1 1 H7 V4 H10 V12 H1 Z" fill="url(#gg)"/><rect x="8" y="2" width="1" height="1" fill="#00d800"/></svg>
<div style="position:absolute;top:271px;font-size:12px;line-height:12px;color:#000000;white-space:pre;left:22.08px;transform-origin:0 0;transform:scaleX(1.0156);">HKLM</div>
<div style="position:absolute;top:271px;font-size:12px;line-height:12px;color:#000000;white-space:pre;left:70.03px;transform-origin:0 0;transform:scaleX(0.9674);">Software</div>
<div style="position:absolute;top:271px;font-size:12px;line-height:12px;color:#000000;white-space:pre;left:120.96px;transform-origin:0 0;transform:scaleX(1.0375);">Microsoft</div>
<div style="position:absolute;top:271px;font-size:12px;line-height:12px;color:#000000;white-space:pre;left:177.70px;transform-origin:0 0;transform:scaleX(0.9735);">Windows</div>
<div style="position:absolute;top:271px;font-size:12px;line-height:12px;color:#000000;white-space:pre;left:231.70px;transform-origin:0 0;transform:scaleX(0.9712);">CurrentVersion</div>
<div style="position:absolute;top:271px;font-size:12px;line-height:12px;color:#000000;white-space:pre;left:314.28px;transform-origin:0 0;transform:scaleX(0.8190);">Run</div>
<svg style="position:absolute;left:0;top:0;overflow:visible" width="1" height="1"><path d="M65.9 271 L70.0 282" stroke="#000" stroke-width="1.05"/><path d="M116.5 271 L120.5 282" stroke="#000" stroke-width="1.05"/><path d="M172.8 271 L176.5 282" stroke="#000" stroke-width="1.05"/><path d="M226.5 271 L230.5 282" stroke="#000" stroke-width="1.05"/><path d="M310.5 271 L314.5 282" stroke="#000" stroke-width="1.05"/><path d="M333.7 271 L340.0 282" stroke="#000" stroke-width="1.05"/></svg>
<div style="position:absolute;top:271px;font-size:12px;line-height:12px;color:#000000;white-space:pre;left:373.5px;">Nvtmru</div>
<div style="position:absolute;top:271px;font-size:12px;line-height:12px;color:#000000;white-space:pre;left:628.97px;transform-origin:0 0;transform:scaleX(1.0333);">String</div>
<svg style="position:absolute;left:8px;top:289px" width="11" height="13" viewBox="0 0 11 13" shape-rendering="crispEdges">
<defs><linearGradient id="gg" gradientUnits="userSpaceOnUse" x1="1" y1="1" x2="9" y2="12"><stop offset="0" stop-color="#00f400"/><stop offset="1" stop-color="#008c00"/></linearGradient></defs>
<path d="M0 0 H8 V1 H9 V2 H10 V3 H11 V13 H0 Z" fill="#000"/>
<path d="M1 1 H7 V4 H10 V12 H1 Z" fill="url(#gg)"/><rect x="8" y="2" width="1" height="1" fill="#00d800"/></svg>
<div style="position:absolute;top:290px;font-size:12px;line-height:12px;color:#000000;white-space:pre;left:22.08px;transform-origin:0 0;transform:scaleX(1.0156);">HKLM</div>
<div style="position:absolute;top:290px;font-size:12px;line-height:12px;color:#000000;white-space:pre;left:70.03px;transform-origin:0 0;transform:scaleX(0.9674);">Software</div>
<div style="position:absolute;top:290px;font-size:12px;line-height:12px;color:#000000;white-space:pre;left:120.96px;transform-origin:0 0;transform:scaleX(1.0375);">Microsoft</div>
<div style="position:absolute;top:290px;font-size:12px;line-height:12px;color:#000000;white-space:pre;left:177.70px;transform-origin:0 0;transform:scaleX(0.9735);">Windows</div>
<div style="position:absolute;top:290px;font-size:12px;line-height:12px;color:#000000;white-space:pre;left:231.70px;transform-origin:0 0;transform:scaleX(0.9712);">CurrentVersion</div>
<div style="position:absolute;top:290px;font-size:12px;line-height:12px;color:#000000;white-space:pre;left:314.28px;transform-origin:0 0;transform:scaleX(0.8190);">Run</div>
<svg style="position:absolute;left:0;top:0;overflow:visible" width="1" height="1"><path d="M65.9 290 L70.0 301" stroke="#000" stroke-width="1.05"/><path d="M116.5 290 L120.5 301" stroke="#000" stroke-width="1.05"/><path d="M172.8 290 L176.5 301" stroke="#000" stroke-width="1.05"/><path d="M226.5 290 L230.5 301" stroke="#000" stroke-width="1.05"/><path d="M310.5 290 L314.5 301" stroke="#000" stroke-width="1.05"/><path d="M333.7 290 L340.0 301" stroke="#000" stroke-width="1.05"/></svg>
<div style="position:absolute;top:290px;font-size:12px;line-height:12px;color:#000000;white-space:pre;left:372.55px;transform-origin:0 0;transform:scaleX(0.9492);">SunJavaUpdateSched</div>
<div style="position:absolute;top:290px;font-size:12px;line-height:12px;color:#000000;white-space:pre;left:628.97px;transform-origin:0 0;transform:scaleX(1.0333);">String</div>
<svg style="position:absolute;left:8px;top:308px" width="11" height="13" viewBox="0 0 11 13" shape-rendering="crispEdges">
<defs><linearGradient id="gg" gradientUnits="userSpaceOnUse" x1="1" y1="1" x2="9" y2="12"><stop offset="0" stop-color="#00f400"/><stop offset="1" stop-color="#008c00"/></linearGradient></defs>
<path d="M0 0 H8 V1 H9 V2 H10 V3 H11 V13 H0 Z" fill="#000"/>
<path d="M1 1 H7 V4 H10 V12 H1 Z" fill="url(#gg)"/><rect x="8" y="2" width="1" height="1" fill="#00d800"/></svg>
<div style="position:absolute;top:309px;font-size:12px;line-height:12px;color:#000000;white-space:pre;left:22.08px;transform-origin:0 0;transform:scaleX(1.0156);">HKLM</div>
<div style="position:absolute;top:309px;font-size:12px;line-height:12px;color:#000000;white-space:pre;left:70.03px;transform-origin:0 0;transform:scaleX(0.9674);">Software</div>
<div style="position:absolute;top:309px;font-size:12px;line-height:12px;color:#000000;white-space:pre;left:120.96px;transform-origin:0 0;transform:scaleX(1.0375);">Microsoft</div>
<div style="position:absolute;top:309px;font-size:12px;line-height:12px;color:#000000;white-space:pre;left:177.70px;transform-origin:0 0;transform:scaleX(0.9735);">Windows</div>
<div style="position:absolute;top:309px;font-size:12px;line-height:12px;color:#000000;white-space:pre;left:231.70px;transform-origin:0 0;transform:scaleX(0.9712);">CurrentVersion</div>
<div style="position:absolute;top:309px;font-size:12px;line-height:12px;color:#000000;white-space:pre;left:314.28px;transform-origin:0 0;transform:scaleX(0.8190);">Run</div>
<svg style="position:absolute;left:0;top:0;overflow:visible" width="1" height="1"><path d="M65.9 309 L70.0 320" stroke="#000" stroke-width="1.05"/><path d="M116.5 309 L120.5 320" stroke="#000" stroke-width="1.05"/><path d="M172.8 309 L176.5 320" stroke="#000" stroke-width="1.05"/><path d="M226.5 309 L230.5 320" stroke="#000" stroke-width="1.05"/><path d="M310.5 309 L314.5 320" stroke="#000" stroke-width="1.05"/><path d="M333.7 309 L340.0 320" stroke="#000" stroke-width="1.05"/></svg>
<div style="position:absolute;top:309px;font-size:12px;line-height:12px;color:#000000;white-space:pre;left:373.50px;transform-origin:0 0;transform:scaleX(1.0000);">AdobeAAMUpdater-1.0</div>
<div style="position:absolute;top:309px;font-size:12px;line-height:12px;color:#000000;white-space:pre;left:628.97px;transform-origin:0 0;transform:scaleX(1.0333);">String</div>
<svg style="position:absolute;left:8px;top:327px" width="11" height="13" viewBox="0 0 11 13" shape-rendering="crispEdges">
<defs><linearGradient id="gg" gradientUnits="userSpaceOnUse" x1="1" y1="1" x2="9" y2="12"><stop offset="0" stop-color="#00f400"/><stop offset="1" stop-color="#008c00"/></linearGradient></defs>
<path d="M0 0 H8 V1 H9 V2 H10 V3 H11 V13 H0 Z" fill="#000"/>
<path d="M1 1 H7 V4 H10 V12 H1 Z" fill="url(#gg)"/><rect x="8" y="2" width="1" height="1" fill="#00d800"/></svg>
<div style="position:absolute;top:328px;font-size:12px;line-height:12px;color:#000000;white-space:pre;left:22.08px;transform-origin:0 0;transform:scaleX(1.0156);">HKLM</div>
<div style="position:absolute;top:328px;font-size:12px;line-height:12px;color:#000000;white-space:pre;left:70.03px;transform-origin:0 0;transform:scaleX(0.9674);">Software</div>
<div style="position:absolute;top:328px;font-size:12px;line-height:12px;color:#000000;white-space:pre;left:120.96px;transform-origin:0 0;transform:scaleX(1.0375);">Microsoft</div>
<div style="position:absolute;top:328px;font-size:12px;line-height:12px;color:#000000;white-space:pre;left:177.70px;transform-origin:0 0;transform:scaleX(0.9735);">Windows</div>
<div style="position:absolute;top:328px;font-size:12px;line-height:12px;color:#000000;white-space:pre;left:231.70px;transform-origin:0 0;transform:scaleX(0.9712);">CurrentVersion</div>
<div style="position:absolute;top:328px;font-size:12px;line-height:12px;color:#000000;white-space:pre;left:314.28px;transform-origin:0 0;transform:scaleX(0.8190);">Run</div>
<svg style="position:absolute;left:0;top:0;overflow:visible" width="1" height="1"><path d="M65.9 328 L70.0 339" stroke="#000" stroke-width="1.05"/><path d="M116.5 328 L120.5 339" stroke="#000" stroke-width="1.05"/><path d="M172.8 328 L176.5 339" stroke="#000" stroke-width="1.05"/><path d="M226.5 328 L230.5 339" stroke="#000" stroke-width="1.05"/><path d="M310.5 328 L314.5 339" stroke="#000" stroke-width="1.05"/><path d="M333.7 328 L340.0 339" stroke="#000" stroke-width="1.05"/></svg>
<div style="position:absolute;top:328px;font-size:12px;line-height:12px;color:#000000;white-space:pre;left:373.50px;transform-origin:0 0;transform:scaleX(0.9829);">Adobe Creative Cloud</div>
<div style="position:absolute;top:328px;font-size:12px;line-height:12px;color:#000000;white-space:pre;left:628.97px;transform-origin:0 0;transform:scaleX(1.0333);">String</div>
<svg style="position:absolute;left:8px;top:346px" width="11" height="13" viewBox="0 0 11 13" shape-rendering="crispEdges">
<defs><linearGradient id="gg" gradientUnits="userSpaceOnUse" x1="1" y1="1" x2="9" y2="12"><stop offset="0" stop-color="#00f400"/><stop offset="1" stop-color="#008c00"/></linearGradient></defs>
<path d="M0 0 H8 V1 H9 V2 H10 V3 H11 V13 H0 Z" fill="#000"/>
<path d="M1 1 H7 V4 H10 V12 H1 Z" fill="url(#gg)"/><rect x="8" y="2" width="1" height="1" fill="#00d800"/></svg>
<div style="position:absolute;top:347px;font-size:12px;line-height:12px;color:#000000;white-space:pre;left:22.08px;transform-origin:0 0;transform:scaleX(1.0156);">HKLM</div>
<div style="position:absolute;top:347px;font-size:12px;line-height:12px;color:#000000;white-space:pre;left:70.03px;transform-origin:0 0;transform:scaleX(0.9674);">Software</div>
<div style="position:absolute;top:347px;font-size:12px;line-height:12px;color:#000000;white-space:pre;left:120.96px;transform-origin:0 0;transform:scaleX(1.0375);">Microsoft</div>
<div style="position:absolute;top:347px;font-size:12px;line-height:12px;color:#000000;white-space:pre;left:177.70px;transform-origin:0 0;transform:scaleX(0.9735);">Windows</div>
<div style="position:absolute;top:347px;font-size:12px;line-height:12px;color:#000000;white-space:pre;left:231.70px;transform-origin:0 0;transform:scaleX(0.9712);">CurrentVersion</div>
<div style="position:absolute;top:347px;font-size:12px;line-height:12px;color:#000000;white-space:pre;left:314.28px;transform-origin:0 0;transform:scaleX(0.8190);">Run</div>
<svg style="position:absolute;left:0;top:0;overflow:visible" width="1" height="1"><path d="M65.9 347 L70.0 358" stroke="#000" stroke-width="1.05"/><path d="M116.5 347 L120.5 358" stroke="#000" stroke-width="1.05"/><path d="M172.8 347 L176.5 358" stroke="#000" stroke-width="1.05"/><path d="M226.5 347 L230.5 358" stroke="#000" stroke-width="1.05"/><path d="M310.5 347 L314.5 358" stroke="#000" stroke-width="1.05"/><path d="M333.7 347 L340.0 358" stroke="#000" stroke-width="1.05"/></svg>
<div style="position:absolute;top:347px;font-size:12px;line-height:12px;color:#000000;white-space:pre;left:372.53px;transform-origin:0 0;transform:scaleX(0.9697);">ShadowPlay</div>
<div style="position:absolute;top:347px;font-size:12px;line-height:12px;color:#000000;white-space:pre;left:628.97px;transform-origin:0 0;transform:scaleX(1.0333);">String</div>
<svg style="position:absolute;left:8px;top:365px" width="11" height="13" viewBox="0 0 11 13" shape-rendering="crispEdges">
<defs><linearGradient id="gg" gradientUnits="userSpaceOnUse" x1="1" y1="1" x2="9" y2="12"><stop offset="0" stop-color="#00f400"/><stop offset="1" stop-color="#008c00"/></linearGradient></defs>
<path d="M0 0 H8 V1 H9 V2 H10 V3 H11 V13 H0 Z" fill="#000"/>
<path d="M1 1 H7 V4 H10 V12 H1 Z" fill="url(#gg)"/><rect x="8" y="2" width="1" height="1" fill="#00d800"/></svg>
<div style="position:absolute;top:366px;font-size:12px;line-height:12px;color:#000000;white-space:pre;left:22.08px;transform-origin:0 0;transform:scaleX(1.0156);">HKLM</div>
<div style="position:absolute;top:366px;font-size:12px;line-height:12px;color:#000000;white-space:pre;left:70.03px;transform-origin:0 0;transform:scaleX(0.9674);">Software</div>
<div style="position:absolute;top:366px;font-size:12px;line-height:12px;color:#000000;white-space:pre;left:120.96px;transform-origin:0 0;transform:scaleX(1.0375);">Microsoft</div>
<div style="position:absolute;top:366px;font-size:12px;line-height:12px;color:#000000;white-space:pre;left:177.70px;transform-origin:0 0;transform:scaleX(0.9735);">Windows</div>
<div style="position:absolute;top:366px;font-size:12px;line-height:12px;color:#000000;white-space:pre;left:231.70px;transform-origin:0 0;transform:scaleX(0.9712);">CurrentVersion</div>
<div style="position:absolute;top:366px;font-size:12px;line-height:12px;color:#000000;white-space:pre;left:314.28px;transform-origin:0 0;transform:scaleX(0.8190);">Run</div>
<svg style="position:absolute;left:0;top:0;overflow:visible" width="1" height="1"><path d="M65.9 366 L70.0 377" stroke="#000" stroke-width="1.05"/><path d="M116.5 366 L120.5 377" stroke="#000" stroke-width="1.05"/><path d="M172.8 366 L176.5 377" stroke="#000" stroke-width="1.05"/><path d="M226.5 366 L230.5 377" stroke="#000" stroke-width="1.05"/><path d="M310.5 366 L314.5 377" stroke="#000" stroke-width="1.05"/><path d="M333.7 366 L340.0 377" stroke="#000" stroke-width="1.05"/></svg>
<div style="position:absolute;top:366px;font-size:12px;line-height:12px;color:#000000;white-space:pre;left:373.50px;transform-origin:0 0;transform:scaleX(0.9830);">vmware-tray.exe</div>
<div style="position:absolute;top:366px;font-size:12px;line-height:12px;color:#000000;white-space:pre;left:628.97px;transform-origin:0 0;transform:scaleX(1.0333);">String</div>
<svg style="position:absolute;left:8px;top:384px" width="11" height="13" viewBox="0 0 11 13" shape-rendering="crispEdges">
<defs><linearGradient id="gg" gradientUnits="userSpaceOnUse" x1="1" y1="1" x2="9" y2="12"><stop offset="0" stop-color="#00f400"/><stop offset="1" stop-color="#008c00"/></linearGradient></defs>
<path d="M0 0 H8 V1 H9 V2 H10 V3 H11 V13 H0 Z" fill="#000"/>
<path d="M1 1 H7 V4 H10 V12 H1 Z" fill="url(#gg)"/><rect x="8" y="2" width="1" height="1" fill="#00d800"/></svg>
<div style="position:absolute;top:385px;font-size:12px;line-height:12px;color:#000000;white-space:pre;left:22.08px;transform-origin:0 0;transform:scaleX(1.0156);">HKLM</div>
<div style="position:absolute;top:385px;font-size:12px;line-height:12px;color:#000000;white-space:pre;left:70.03px;transform-origin:0 0;transform:scaleX(0.9674);">Software</div>
<div style="position:absolute;top:385px;font-size:12px;line-height:12px;color:#000000;white-space:pre;left:120.96px;transform-origin:0 0;transform:scaleX(1.0375);">Microsoft</div>
<div style="position:absolute;top:385px;font-size:12px;line-height:12px;color:#000000;white-space:pre;left:177.70px;transform-origin:0 0;transform:scaleX(0.9735);">Windows</div>
<div style="position:absolute;top:385px;font-size:12px;line-height:12px;color:#000000;white-space:pre;left:231.70px;transform-origin:0 0;transform:scaleX(0.9712);">CurrentVersion</div>
<div style="position:absolute;top:385px;font-size:12px;line-height:12px;color:#000000;white-space:pre;left:314.28px;transform-origin:0 0;transform:scaleX(0.8190);">Run</div>
<svg style="position:absolute;left:0;top:0;overflow:visible" width="1" height="1"><path d="M65.9 385 L70.0 396" stroke="#000" stroke-width="1.05"/><path d="M116.5 385 L120.5 396" stroke="#000" stroke-width="1.05"/><path d="M172.8 385 L176.5 396" stroke="#000" stroke-width="1.05"/><path d="M226.5 385 L230.5 396" stroke="#000" stroke-width="1.05"/><path d="M310.5 385 L314.5 396" stroke="#000" stroke-width="1.05"/><path d="M333.7 385 L340.0 396" stroke="#000" stroke-width="1.05"/></svg>
<div style="position:absolute;top:385px;font-size:12px;line-height:12px;color:#000000;white-space:pre;left:373.50px;transform-origin:0 0;transform:scaleX(1.0000);">egui</div>
<div style="position:absolute;top:385px;font-size:12px;line-height:12px;color:#000000;white-space:pre;left:628.97px;transform-origin:0 0;transform:scaleX(1.0333);">String</div>
<svg style="position:absolute;left:8px;top:403px" width="11" height="13" viewBox="0 0 11 13" shape-rendering="crispEdges">
<defs><linearGradient id="gg" gradientUnits="userSpaceOnUse" x1="1" y1="1" x2="9" y2="12"><stop offset="0" stop-color="#00f400"/><stop offset="1" stop-color="#008c00"/></linearGradient></defs>
<path d="M0 0 H8 V1 H9 V2 H10 V3 H11 V13 H0 Z" fill="#000"/>
<path d="M1 1 H7 V4 H10 V12 H1 Z" fill="url(#gg)"/><rect x="8" y="2" width="1" height="1" fill="#00d800"/></svg>
<div style="position:absolute;top:404px;font-size:12px;line-height:12px;color:#000000;white-space:pre;left:22.08px;transform-origin:0 0;transform:scaleX(1.0156);">HKLM</div>
<div style="position:absolute;top:404px;font-size:12px;line-height:12px;color:#000000;white-space:pre;left:70.03px;transform-origin:0 0;transform:scaleX(0.9674);">Software</div>
<div style="position:absolute;top:404px;font-size:12px;line-height:12px;color:#000000;white-space:pre;left:120.96px;transform-origin:0 0;transform:scaleX(1.0375);">Microsoft</div>
<div style="position:absolute;top:404px;font-size:12px;line-height:12px;color:#000000;white-space:pre;left:177.70px;transform-origin:0 0;transform:scaleX(0.9735);">Windows</div>
<div style="position:absolute;top:404px;font-size:12px;line-height:12px;color:#000000;white-space:pre;left:231.70px;transform-origin:0 0;transform:scaleX(0.9712);">CurrentVersion</div>
<div style="position:absolute;top:404px;font-size:12px;line-height:12px;color:#000000;white-space:pre;left:314.28px;transform-origin:0 0;transform:scaleX(0.8190);">Run</div>
<svg style="position:absolute;left:0;top:0;overflow:visible" width="1" height="1"><path d="M65.9 404 L70.0 415" stroke="#000" stroke-width="1.05"/><path d="M116.5 404 L120.5 415" stroke="#000" stroke-width="1.05"/><path d="M172.8 404 L176.5 415" stroke="#000" stroke-width="1.05"/><path d="M226.5 404 L230.5 415" stroke="#000" stroke-width="1.05"/><path d="M310.5 404 L314.5 415" stroke="#000" stroke-width="1.05"/><path d="M333.7 404 L340.0 415" stroke="#000" stroke-width="1.05"/></svg>
<div style="position:absolute;top:404px;font-size:12px;line-height:12px;color:#000000;white-space:pre;left:373.5px;">NvBackend</div>
<div style="position:absolute;top:404px;font-size:12px;line-height:12px;color:#000000;white-space:pre;left:628.97px;transform-origin:0 0;transform:scaleX(1.0333);">String</div>
</div>
<div style="position:absolute;left:916px;top:265px;width:1px;height:436px;background:#ffffff"></div>
<div style="position:absolute;left:917px;top:265px;width:17px;height:436px;background:#f0f0f0"></div>
<div style="position:absolute;left:917px;top:283px;width:15px;height:382px;background:#cdcdcd"></div>
<svg style="position:absolute;left:0;top:0" width="943" height="710" viewBox="0 0 943 710">
<path d="M20 233.2 L16.3 236.5 L20 239.8" fill="none" stroke="#606060" stroke-width="2.1"/>
<path d="M923 233.2 L926.7 236.5 L923 239.8" fill="none" stroke="#606060" stroke-width="2.1"/>
<path d="M921.2 277.6 L924.5 274 L927.8 277.6" fill="none" stroke="#606060" stroke-width="2.1"/>
<path d="M921.2 689.4 L924.5 693 L927.8 689.4" fill="none" stroke="#606060" stroke-width="2.1"/>
</svg>
<div style="position:absolute;left:32px;top:166px;width:204px;height:310px;background:#f0f0f0;border:1px solid #979797;outline:1px solid #fcfcfc;outline-offset:-2px;box-shadow:3px 3px 3px -1px rgba(0,0,0,0.55);"></div>
<svg style="position:absolute;left:36px;top:170px" width="16" height="16" viewBox="0 0 16 16"><defs><linearGradient id="fg" x1="0" y1="0" x2="1" y2="1"><stop offset="0" stop-color="#fff8b0"/><stop offset="0.6" stop-color="#fbe88a"/><stop offset="1" stop-color="#f8c8a0"/></linearGradient></defs><path d="M0.5 1.5 H6.5 L8 3 H14 V12.5 H0.5 Z" fill="url(#fg)" stroke="#a89a20"/><path d="M1 13.5 H14.5 V3.5" fill="none" stroke="#101010" stroke-width="1"/><path d="M7.5 1 L9 2.5" stroke="#101010"/></svg>
<div style="position:absolute;top:173px;font-size:12px;line-height:12px;color:#000000;white-space:pre;left:56.52px;transform-origin:0 0;transform:scaleX(0.9764);">New Key...</div>
<div style="position:absolute;top:173px;font-size:12px;line-height:12px;color:#000000;white-space:pre;left:211.94px;transform-origin:0 0;transform:scaleX(0.8615);">F7</div>
<svg style="position:absolute;left:36px;top:189px" width="16" height="16" viewBox="0 0 16 16"><defs><linearGradient id="gb1" x1="0" y1="0" x2="1" y2="1"><stop offset="0" stop-color="#e4f2fe"/><stop offset="1" stop-color="#9ccaf6"/></linearGradient></defs><path d="M1.5 1.5 H11.5 L14.5 4.5 V14.5 H1.5 Z" fill="url(#gb1)" stroke="#4d5d75"/><path d="M11.5 1.5 V4.5 H14.5" fill="none" stroke="#4d5d75" stroke-width="0.6"/><path d="M1 3.5 H7 M4 0.5 V6.5" stroke="#5ca03a" stroke-width="2"/></svg>
<div style="position:absolute;top:192px;font-size:12px;line-height:12px;color:#000000;white-space:pre;left:56.52px;transform-origin:0 0;transform:scaleX(0.9846);">New Value...</div>
<div style="position:absolute;top:192px;font-size:12px;line-height:12px;color:#000000;white-space:pre;left:179.51px;transform-origin:0 0;transform:scaleX(0.9886);">Shift+F4</div>
<div style="position:absolute;left:36px;top:211px;width:199px;height:1px;background:#a0a0a0"></div>
<div style="position:absolute;left:36px;top:212px;width:199px;height:1px;background:#ffffff"></div>
<svg style="position:absolute;left:36px;top:216px" width="16" height="16" viewBox="0 0 16 16"><defs><linearGradient id="gb2" x1="0" y1="0" x2="1" y2="1"><stop offset="0" stop-color="#e4f2fe"/><stop offset="1" stop-color="#9ccaf6"/></linearGradient></defs><rect x="1.5" y="1.5" width="13" height="13" fill="url(#gb2)" stroke="#58708c"/><path d="M5 11 L13 3" stroke="#2f6fd8" stroke-width="2.2"/><path d="M3 13 L5.5 10.5" stroke="#f0a020" stroke-width="2.4"/><path d="M3 13.2 H13" stroke="#8aa0b8" stroke-width="0.8"/></svg>
<div style="position:absolute;top:219px;font-size:12px;line-height:12px;color:#000000;white-space:pre;left:56.53px;transform-origin:0 0;transform:scaleX(0.9677);">Edit Value...</div>
<div style="position:absolute;top:219px;font-size:12px;line-height:12px;color:#000000;white-space:pre;left:211.94px;transform-origin:0 0;transform:scaleX(0.8615);">F4</div>
<svg style="position:absolute;left:36px;top:235px" width="16" height="16" viewBox="0 0 16 16"><path d="M4.5 1.5 H12.5 V14.5 H1.5 V4.5 Z" fill="#f6f6f6" stroke="#7a7a7a"/><path d="M4.5 1.5 V4.5 H1.5" fill="none" stroke="#7a7a7a" stroke-width="0.7"/><path d="M8 12.5 L14.5 6" stroke="#3a3020" stroke-width="4.2"/><path d="M8 12.5 L14.5 6" stroke="#e8a040" stroke-width="2.6"/><path d="M6 14.5 L8 12.5" stroke="#d8c890" stroke-width="2.6"/></svg>
<div style="position:absolute;top:238px;font-size:12px;line-height:12px;color:#000000;white-space:pre;left:57.50px;transform-origin:0 0;transform:scaleX(0.9633);">Change Data Type...</div>
<div style="position:absolute;top:238px;font-size:12px;line-height:12px;color:#000000;white-space:pre;left:185.60px;transform-origin:0 0;transform:scaleX(0.9600);">Ctrl+F4</div>
<svg style="position:absolute;left:36px;top:254px" width="16" height="16" viewBox="0 0 16 16"><rect x="1.5" y="2.5" width="13" height="12" fill="#eef4fc" stroke="#6c94d6"/><path d="M3 4.5 H13" stroke="#58b058" stroke-width="1.2"/><path d="M3 7 H6 M3 9.5 H6 M3 12 H6" stroke="#9ab8e0" stroke-width="1.2"/><path d="M5 14 L14.5 5.5" stroke="#d88830" stroke-width="4.6"/><path d="M5 14 L14.5 5.5" stroke="#f8e070" stroke-width="3"/><path d="M3.5 15.5 L5 14" stroke="#b07840" stroke-width="2"/></svg>
<div style="position:absolute;top:257px;font-size:12px;line-height:12px;color:#000000;white-space:pre;left:57.50px;transform-origin:0 0;transform:scaleX(0.9500);">View Data As...</div>
<div style="position:absolute;top:257px;font-size:12px;line-height:12px;color:#000000;white-space:pre;left:152.59px;transform-origin:0 0;transform:scaleX(1.0057);">Shift+Ctrl+F4</div>
<div style="position:absolute;left:36px;top:276px;width:199px;height:1px;background:#a0a0a0"></div>
<div style="position:absolute;left:36px;top:277px;width:199px;height:1px;background:#ffffff"></div>
<svg style="position:absolute;left:36px;top:281px" width="16" height="16" viewBox="0 0 16 16"><defs><linearGradient id="gb3" x1="0" y1="0" x2="1" y2="1"><stop offset="0" stop-color="#e4f2fe"/><stop offset="1" stop-color="#9ccaf6"/></linearGradient></defs><path d="M1.5 2.5 H11.5 L14.5 5.5 V15.5 H1.5 Z" fill="url(#gb3)" stroke="#4d5d75"/><path d="M11.5 2.5 V5.5 H14.5" fill="none" stroke="#4d5d75" stroke-width="0.6"/><path d="M1.2 1.8 L5.8 6 M5.8 1.8 L1.2 6" stroke="#e81818" stroke-width="1.4"/></svg>
<div style="position:absolute;top:284px;font-size:12px;line-height:12px;color:#000000;white-space:pre;left:56.55px;transform-origin:0 0;transform:scaleX(0.9535);">Delete...</div>
<div style="position:absolute;top:284px;font-size:12px;line-height:12px;color:#000000;white-space:pre;left:206.74px;transform-origin:0 0;transform:scaleX(0.9588);">Del</div>
<div style="position:absolute;left:36px;top:303px;width:199px;height:1px;background:#a0a0a0"></div>
<div style="position:absolute;left:36px;top:304px;width:199px;height:1px;background:#ffffff"></div>
<svg style="position:absolute;left:36px;top:308px" width="16" height="16" viewBox="0 0 16 16"><defs><linearGradient id="gb4" x1="0" y1="0" x2="1" y2="1"><stop offset="0" stop-color="#e4f2fe"/><stop offset="1" stop-color="#9ccaf6"/></linearGradient></defs><path d="M1.5 2.5 H7.5 L10 5 V12.5 H1.5 Z" fill="url(#gb4)" stroke="#6a8ab8"/><path d="M5.5 4.5 H11.5 L14.5 7.5 V15.5 H5.5 Z" fill="url(#gb4)" stroke="#6a8ab8"/></svg>
<div style="position:absolute;top:311px;font-size:12px;line-height:12px;color:#000000;white-space:pre;left:57.50px;transform-origin:0 0;transform:scaleX(1.0139);">Copy...</div>
<div style="position:absolute;top:311px;font-size:12px;line-height:12px;color:#000000;white-space:pre;left:211.08px;transform-origin:0 0;transform:scaleX(0.9231);">F5</div>
<svg style="position:absolute;left:36px;top:327px" width="16" height="16" viewBox="0 0 16 16"><defs><linearGradient id="gb5" x1="0" y1="0" x2="1" y2="1"><stop offset="0" stop-color="#e4f2fe"/><stop offset="1" stop-color="#9ccaf6"/></linearGradient></defs><path d="M1.5 2.5 H11.5 L14.5 5.5 V15.5 H1.5 Z" fill="url(#gb5)" stroke="#4d6d95"/><path d="M11.5 2.5 V5.5 H14.5" fill="none" stroke="#4d6d95" stroke-width="0.6"/><path d="M4 9 H10" stroke="#3a80d8" stroke-width="2"/><path d="M8 6 L11.5 9 L8 12 Z" fill="#3a80d8"/></svg>
<div style="position:absolute;top:330px;font-size:12px;line-height:12px;color:#000000;white-space:pre;left:56.50px;transform-origin:0 0;transform:scaleX(1.0000);">Rename/Move...</div>
<div style="position:absolute;top:330px;font-size:12px;line-height:12px;color:#000000;white-space:pre;left:211.08px;transform-origin:0 0;transform:scaleX(0.9231);">F6</div>
<svg style="position:absolute;left:36px;top:346px" width="16" height="16" viewBox="0 0 16 16"><rect x="0.5" y="4.5" width="15" height="8" fill="#fcfcfc" stroke="#d8d8d8"/><rect x="1.5" y="6.5" width="7" height="4" fill="#5a88d0" stroke="#3a60a0" stroke-width="0.8"/><path d="M10.5 5 V12.5 M9 5 H12 M9 12.5 H12" stroke="#202020" stroke-width="1"/></svg>
<div style="position:absolute;top:349px;font-size:12px;line-height:12px;color:#000000;white-space:pre;left:56.53px;transform-origin:0 0;transform:scaleX(0.9744);">Rename Inplace</div>
<div style="position:absolute;top:349px;font-size:12px;line-height:12px;color:#000000;white-space:pre;left:179.00px;transform-origin:0 0;transform:scaleX(1.0000);">Shift+F6</div>
<div style="position:absolute;left:36px;top:368px;width:199px;height:1px;background:#a0a0a0"></div>
<div style="position:absolute;left:36px;top:369px;width:199px;height:1px;background:#ffffff"></div>
<svg style="position:absolute;left:36px;top:373px" width="16" height="16" viewBox="0 0 16 16"><defs><linearGradient id="gb6" x1="0" y1="0" x2="1" y2="1"><stop offset="0" stop-color="#e4f2fe"/><stop offset="1" stop-color="#9ccaf6"/></linearGradient></defs><path d="M1.5 1.5 H11.5 L14.5 4.5 V14.5 H1.5 Z" fill="url(#gb6)" stroke="#2a5aa0"/><path d="M11.5 1.5 V4.5 H14.5" fill="none" stroke="#2a5aa0" stroke-width="0.6"/><path d="M3 1.5 H8 V13.5 L5.5 10.5 L3 13.5 Z" fill="#3a84e0" stroke="#1a4a90" stroke-width="0.8"/><path d="M9.5 2 V14" stroke="#2a5aa0" stroke-width="0.8"/></svg>
<div style="position:absolute;top:376px;font-size:12px;line-height:12px;color:#000000;white-space:pre;left:56.49px;transform-origin:0 0;transform:scaleX(1.0094);">Bookmark</div>
<div style="position:absolute;top:376px;font-size:12px;line-height:12px;color:#000000;white-space:pre;left:190.30px;transform-origin:0 0;transform:scaleX(1.0212);">Ctrl+B</div>
<svg style="position:absolute;left:36px;top:392px" width="16" height="16" viewBox="0 0 16 16"><path d="M3 3 H11 V1 L15 4.8 L11 8.7 V6.5 H7 Q5.5 6.5 5.5 8.5 V9.5 Q5.5 11 7 11 H13.8 V15 H3 L1 13 V5 Z" fill="#a4a4a4" stroke="#fafafa" stroke-width="0.5"/></svg>
<div style="position:absolute;top:395px;font-size:12px;line-height:12px;color:#a0a0a0;white-space:pre;left:56.54px;transform-origin:0 0;transform:scaleX(0.9591);">Export Key...</div>
<div style="position:absolute;top:395px;font-size:12px;line-height:12px;color:#a0a0a0;white-space:pre;left:191.00px;transform-origin:0 0;transform:scaleX(0.9706);">Ctrl+E</div>
<div style="position:absolute;left:36px;top:414px;width:199px;height:1px;background:#a0a0a0"></div>
<div style="position:absolute;left:36px;top:415px;width:199px;height:1px;background:#ffffff"></div>
<svg style="position:absolute;left:36px;top:419px" width="16" height="16" viewBox="0 0 16 16"><path d="M8.5 0.8 L8.4 10" stroke="#8fb0d8" stroke-width="1.5"/><path d="M13.6 2.3 L9.3 9" stroke="#7aa0d0" stroke-width="1.4"/><ellipse cx="4.6" cy="11.6" rx="2.6" ry="2.3" fill="none" stroke="#3a7ad0" stroke-width="1.7"/><ellipse cx="9.7" cy="13" rx="2.1" ry="2.6" fill="none" stroke="#2f6cc0" stroke-width="1.7"/></svg>
<div style="position:absolute;top:422px;font-size:12px;line-height:12px;color:#000000;white-space:pre;left:57.50px;transform-origin:0 0;transform:scaleX(0.9919);">Clipboard Cut</div>
<div style="position:absolute;top:422px;font-size:12px;line-height:12px;color:#000000;white-space:pre;left:190.30px;transform-origin:0 0;transform:scaleX(0.9912);">Ctrl+X</div>
<svg style="position:absolute;left:36px;top:438px" width="16" height="16" viewBox="0 0 16 16"><path d="M0.5 1.5 H7 L9.5 4 V11.5 H0.5 Z" fill="#e4f0fc" stroke="#4a78d0"/><path d="M6.5 5.5 H12.5 L15.5 8.5 V15.5 H6.5 Z" fill="#dceefc" stroke="#4a78d0"/></svg>
<div style="position:absolute;top:441px;font-size:12px;line-height:12px;color:#000000;white-space:pre;left:57.50px;transform-origin:0 0;transform:scaleX(0.9952);">Clipboard Copy</div>
<div style="position:absolute;top:441px;font-size:12px;line-height:12px;color:#000000;white-space:pre;left:189.00px;transform-origin:0 0;transform:scaleX(1.0294);">Ctrl+C</div>
<svg style="position:absolute;left:36px;top:457px" width="16" height="16" viewBox="0 0 16 16"><path d="M0.5 1.5 H11 L15.5 6 V16.5 H6.5 V15 H0.5 Z" fill="#a6a6a6" stroke="#fafafa" stroke-width="0.6"/></svg>
<div style="position:absolute;top:460px;font-size:12px;line-height:12px;color:#a0a0a0;white-space:pre;left:57.50px;transform-origin:0 0;transform:scaleX(0.9718);">Clipboard Paste</div>
<div style="position:absolute;top:460px;font-size:12px;line-height:12px;color:#a0a0a0;white-space:pre;left:190.30px;transform-origin:0 0;transform:scaleX(0.9912);">Ctrl+V</div>
<div style="position:absolute;left:381px;top:384px;width:263px;height:180px;background:#f0f0f0;border:1px solid #979797;outline:1px solid #fcfcfc;outline-offset:-2px;"></div>
<svg style="position:absolute;left:385px;top:388px" width="16" height="16" viewBox="0 0 16 16"><defs><linearGradient id="gb7" x1="0" y1="0" x2="1" y2="1"><stop offset="0" stop-color="#e4f2fe"/><stop offset="1" stop-color="#9ccaf6"/></linearGradient></defs><path d="M1.5 1.5 H12 L14.5 4 V14.5 H1.5 Z" fill="url(#gb7)" stroke="#34507a"/><path d="M8 3.5 L12.2 7.5 H10 V11.5 H6 V7.5 H3.8 Z" fill="#68b040"/></svg>
<div style="position:absolute;top:391px;font-size:12px;line-height:12px;color:#000000;white-space:pre;left:406.50px;transform-origin:0 0;transform:scaleX(0.9610);">Jump Here</div>
<div style="position:absolute;top:391px;font-size:12px;line-height:12px;color:#000000;white-space:pre;left:605.07px;transform-origin:0 0;transform:scaleX(0.9286);">Enter</div>
<svg style="position:absolute;left:385px;top:407px" width="16" height="16" viewBox="0 0 16 16"><defs><linearGradient id="gb6" x1="0" y1="0" x2="1" y2="1"><stop offset="0" stop-color="#e4f2fe"/><stop offset="1" stop-color="#9ccaf6"/></linearGradient></defs><path d="M1.5 1.5 H11.5 L14.5 4.5 V14.5 H1.5 Z" fill="url(#gb6)" stroke="#2a5aa0"/><path d="M11.5 1.5 V4.5 H14.5" fill="none" stroke="#2a5aa0" stroke-width="0.6"/><path d="M3 1.5 H8 V13.5 L5.5 10.5 L3 13.5 Z" fill="#3a84e0" stroke="#1a4a90" stroke-width="0.8"/><path d="M9.5 2 V14" stroke="#2a5aa0" stroke-width="0.8"/></svg>
<div style="position:absolute;top:410px;font-size:12px;line-height:12px;color:#000000;white-space:pre;left:405.49px;transform-origin:0 0;transform:scaleX(1.0132);">Bookmark</div>
<div style="position:absolute;top:410px;font-size:12px;line-height:12px;color:#000000;white-space:pre;left:598.90px;transform-origin:0 0;transform:scaleX(1.0030);">Ctrl+B</div>
<svg style="position:absolute;left:385px;top:426px" width="16" height="16" viewBox="0 0 16 16"><defs><linearGradient id="gb8" x1="0" y1="0" x2="1" y2="1"><stop offset="0" stop-color="#e4f2fe"/><stop offset="1" stop-color="#9ccaf6"/></linearGradient></defs><path d="M2.5 2.5 H13.5 Q15 2.5 15 4 V10 Q15 11.5 13.5 11.5 H12 L11 14.5 L9 11.5 H2.5 Q1 11.5 1 10 V4 Q1 2.5 2.5 2.5 Z" fill="url(#gb8)" stroke="#5a80b0"/></svg>
<div style="position:absolute;top:429px;font-size:12px;line-height:12px;color:#000000;white-space:pre;left:406.50px;transform-origin:0 0;transform:scaleX(1.0213);">Comment...</div>
<div style="position:absolute;top:429px;font-size:12px;line-height:12px;color:#000000;white-space:pre;left:591.56px;transform-origin:0 0;transform:scaleX(1.0368);">Shift+C</div>
<div style="position:absolute;left:385px;top:448px;width:258px;height:1px;background:#a0a0a0"></div>
<div style="position:absolute;left:385px;top:449px;width:258px;height:1px;background:#ffffff"></div>
<svg style="position:absolute;left:385px;top:453px" width="16" height="16" viewBox="0 0 16 16"><defs><linearGradient id="gb3" x1="0" y1="0" x2="1" y2="1"><stop offset="0" stop-color="#e4f2fe"/><stop offset="1" stop-color="#9ccaf6"/></linearGradient></defs><path d="M1.5 2.5 H11.5 L14.5 5.5 V15.5 H1.5 Z" fill="url(#gb3)" stroke="#4d5d75"/><path d="M11.5 2.5 V5.5 H14.5" fill="none" stroke="#4d5d75" stroke-width="0.6"/><path d="M1.2 1.8 L5.8 6 M5.8 1.8 L1.2 6" stroke="#e81818" stroke-width="1.4"/></svg>
<div style="position:absolute;top:456px;font-size:12px;line-height:12px;color:#000000;white-space:pre;left:405.54px;transform-origin:0 0;transform:scaleX(0.9585);">Delete Entry</div>
<div style="position:absolute;top:456px;font-size:12px;line-height:12px;color:#000000;white-space:pre;left:615.27px;transform-origin:0 0;transform:scaleX(0.9294);">Del</div>
<div style="position:absolute;left:385px;top:475px;width:258px;height:1px;background:#a0a0a0"></div>
<div style="position:absolute;left:385px;top:476px;width:258px;height:1px;background:#ffffff"></div>
<svg style="position:absolute;left:385px;top:480px" width="16" height="16" viewBox="0 0 16 16"><rect x="0.5" y="0.5" width="14" height="14" fill="none" stroke="#000" stroke-width="1" stroke-dasharray="2 1" shape-rendering="crispEdges"/></svg>
<div style="position:absolute;top:483px;font-size:12px;line-height:12px;color:#000000;white-space:pre;left:405.51px;transform-origin:0 0;transform:scaleX(0.9917);">Select All</div>
<div style="position:absolute;top:483px;font-size:12px;line-height:12px;color:#000000;white-space:pre;left:484.90px;transform-origin:0 0;transform:scaleX(0.9614);">Ctrl++ (ZEHNERTASTATUR)</div>
<svg style="position:absolute;left:385px;top:499px" width="16" height="16" viewBox="0 0 16 16"><rect x="0.5" y="0.5" width="14" height="14" fill="none" stroke="#000" stroke-width="1" stroke-dasharray="2 1" shape-rendering="crispEdges"/></svg>
<div style="position:absolute;top:502px;font-size:12px;line-height:12px;color:#000000;white-space:pre;left:405.50px;transform-origin:0 0;transform:scaleX(1.0049);">Unselect All</div>
<div style="position:absolute;top:502px;font-size:12px;line-height:12px;color:#000000;white-space:pre;left:487.70px;transform-origin:0 0;transform:scaleX(0.9620);">Ctrl+- (ZEHNERTASTATUR)</div>
<svg style="position:absolute;left:385px;top:518px" width="16" height="16" viewBox="0 0 16 16"><rect x="0.5" y="0.5" width="14" height="14" fill="none" stroke="#000" stroke-width="1" stroke-dasharray="2 1" shape-rendering="crispEdges"/></svg>
<div style="position:absolute;top:521px;font-size:12px;line-height:12px;color:#000000;white-space:pre;left:405.51px;transform-origin:0 0;transform:scaleX(0.9889);">Invert Selection</div>
<div style="position:absolute;top:521px;font-size:12px;line-height:12px;color:#000000;white-space:pre;left:523.10px;transform-origin:0 0;transform:scaleX(0.9308);">(ZEHNERTASTATUR)</div>
<div style="position:absolute;left:385px;top:540px;width:258px;height:1px;background:#a0a0a0"></div>
<div style="position:absolute;left:385px;top:541px;width:258px;height:1px;background:#ffffff"></div>
<svg style="position:absolute;left:385px;top:545px" width="16" height="16" viewBox="0 0 16 16"><defs><linearGradient id="rfg" x1="0" y1="0" x2="1" y2="1"><stop offset="0" stop-color="#c8f0ff"/><stop offset="1" stop-color="#58b8ec"/></linearGradient></defs><path d="M3.5 6.8 L6.5 2.3 H11 L12.8 1.2 V6.8 H7.8 L9.6 5 H6.3 Z" fill="url(#rfg)" stroke="#1a6cc0" stroke-width="1"/><path d="M2.7 14.3 V8.3 H8 L6.4 10 H9.6 L12.3 8.6 L9.6 13.3 H4.6 Z" fill="url(#rfg)" stroke="#1a6cc0" stroke-width="1"/></svg>
<div style="position:absolute;top:548px;font-size:12px;line-height:12px;color:#000000;white-space:pre;left:405.57px;transform-origin:0 0;transform:scaleX(0.9293);">Refresh</div>
<div style="position:absolute;top:548px;font-size:12px;line-height:12px;color:#000000;white-space:pre;left:598.90px;transform-origin:0 0;transform:scaleX(0.9735);">Ctrl+R</div>
<svg style="position:absolute;left:706px;top:583px" width="90" height="60" viewBox="0 0 90 60">
<defs><linearGradient id="wmg" x1="0" y1="0" x2="0" y2="1"><stop offset="0" stop-color="#e2efed"/><stop offset="0.5" stop-color="#d3e4e2"/><stop offset="1" stop-color="#c4d8d6"/></linearGradient>
<filter id="wmb" x="-20%" y="-20%" width="140%" height="140%"><feGaussianBlur stdDeviation="1.2"/></filter></defs>
<path d="M8 12 Q8 9 11 9 H43 V6.5 Q43 4.5 45 4.5 H75 Q77.5 4.5 77.5 7 V48 Q77.5 51.5 74 51.5 H11 Q8 51.5 8 48 Z" fill="#8ea6a4" filter="url(#wmb)" transform="translate(-2,2.5)"/>
<path d="M8 12 Q8 9 11 9 H43 V6.5 Q43 4.5 45 4.5 H75 Q77.5 4.5 77.5 7 V48 Q77.5 51.5 74 51.5 H11 Q8 51.5 8 48 Z" fill="url(#wmg)" stroke="#f4fcfb" stroke-width="1.2"/>
<path d="M46 8 Q60 5.5 74 8 Q60 11 46 8Z" fill="#f4fbfa" opacity="0.7"/>
</svg>
<div style="position:absolute;top:602px;font-size:28px;line-height:28px;color:#f6fcfb;white-space:pre;font-weight:bold;left:718.00px;transform-origin:0 0;transform:scaleX(1.0943);text-shadow:2.5px -1.5px 0 #4a6462;-webkit-text-stroke:0;">WIN</div>
<div style="position:absolute;top:603px;font-size:27px;line-height:27px;color:#f6fcfb;white-space:pre;font-weight:bold;left:786.50px;transform-origin:0 0;transform:scaleX(0.9836);text-shadow:2.5px -1.5px 0 #4a6462;-webkit-text-stroke:0;">Total</div>
</body></html>
